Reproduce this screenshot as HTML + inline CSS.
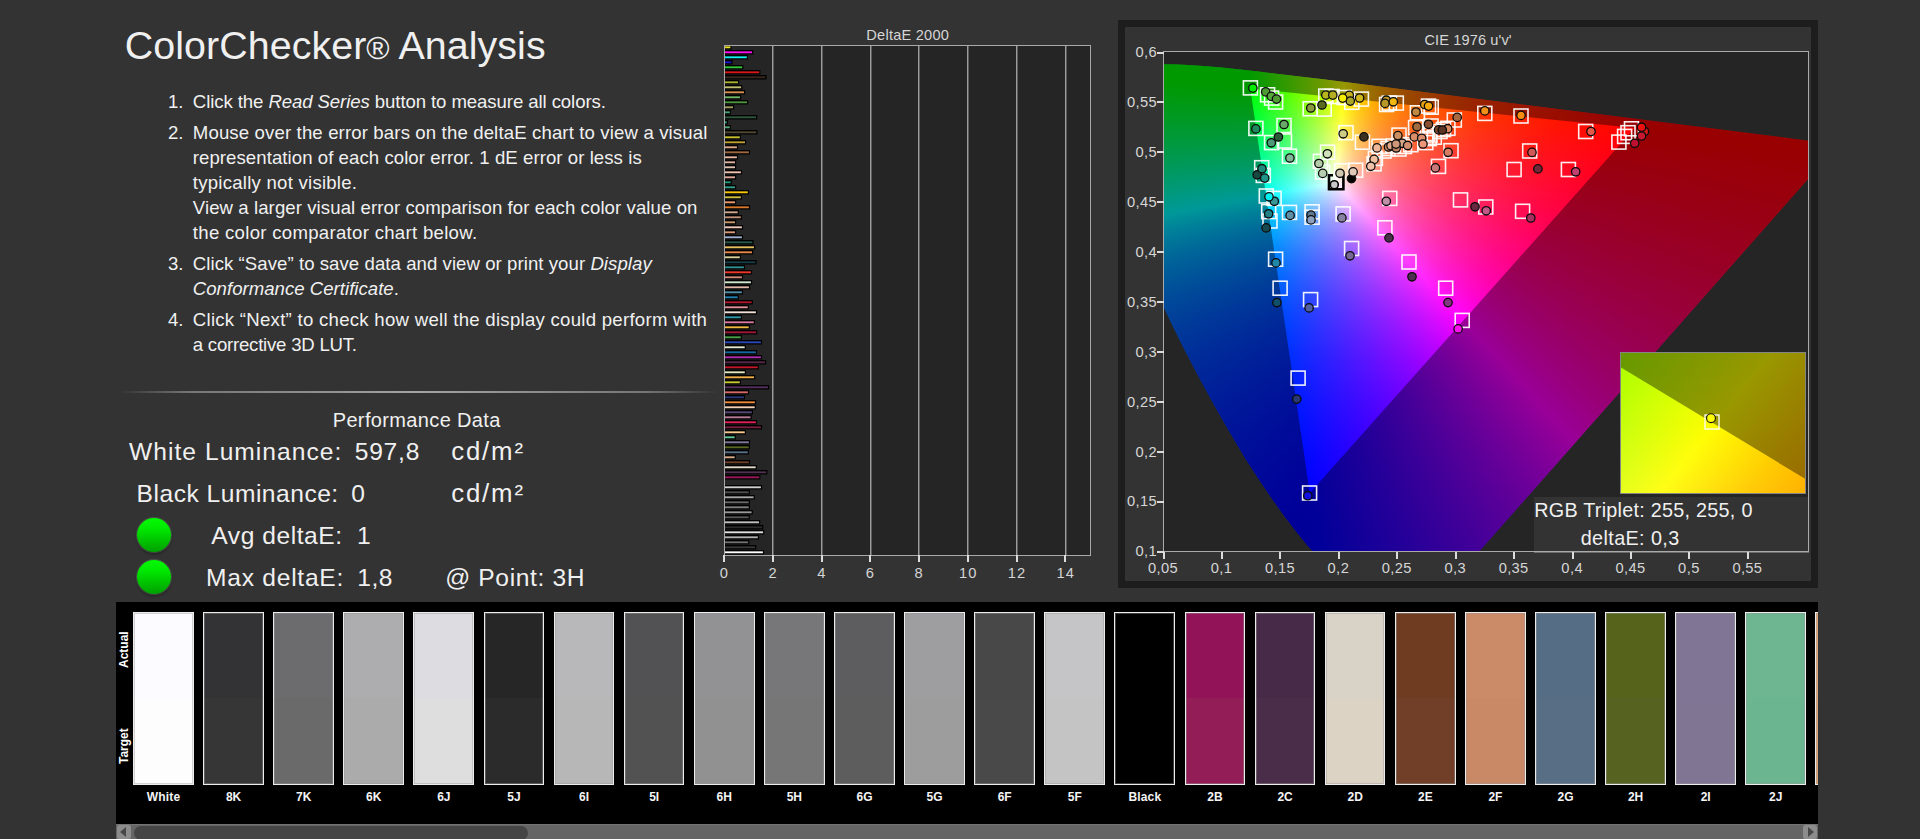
<!DOCTYPE html>
<html lang="en"><head><meta charset="utf-8"><title>ColorChecker Analysis</title>
<style>
*{margin:0;padding:0;box-sizing:border-box}
html,body{width:1920px;height:839px;overflow:hidden;background:#333;font-family:"Liberation Sans", sans-serif}
.t{position:absolute;white-space:nowrap;line-height:1}
.sep{position:absolute;left:118px;top:391px;width:600px;height:2px;background:linear-gradient(90deg,rgba(140,140,140,0),rgba(140,140,140,.75) 12%,rgba(170,170,170,.95) 50%,rgba(140,140,140,.75) 88%,rgba(140,140,140,0))}
.led{position:absolute;left:137px;width:34px;height:34px;border-radius:50%;background:linear-gradient(#04fa04 0,#00ea00 30%,#00c400 65%,#00a000 100%);box-shadow:0 0 0 1px rgba(90,110,90,.55),0 2px 3px rgba(0,0,0,.4)}
#bc{position:absolute;left:724px;top:45px;width:366.5px;height:511px;border:1px solid #a9a9a9;background:#252525;overflow:hidden}
#bc u{position:absolute;top:0;width:1px;height:509px;background:#9c9c9c;box-shadow:1px 0 0 rgba(150,150,150,.5)}
.bt u{position:absolute;top:555px;width:2px;height:6.5px;background:#dcdcdc}
#cf{position:absolute;left:1118px;top:20px;width:700px;height:568px;border:7px solid #1d1d1d;background:#333}
#pl{position:absolute;left:1163px;top:51px;width:646px;height:501px;border:1px solid #aaa;background:#252525;overflow:hidden}
#lc{position:absolute;left:0;top:0;width:644px;height:500px;clip-path:polygon(241.9px 582.5px,240.9px 582.6px,240.3px 583.1px,237.9px 582.9px,235.3px 581.4px,232.6px 579.3px,224.6px 572.4px,181.9px 533.2px,168px 519.8px,156.2px 507.6px,143px 492.9px,132.9px 480.6px,121.4px 465.6px,108.8px 448px,95.4px 428.3px,81.3px 406.4px,66.7px 382.1px,51.6px 355.8px,36.5px 328.2px,21.5px 299.7px,7.1px 270.8px,0.3px 256.3px,-6.2px 242px,-17.8px 214px,-28.1px 187.3px,-36.9px 162.4px,-44.2px 139.6px,-50px 119.3px,-54.2px 101.5px,-57.2px 85.9px,-59px 72.5px,-59.7px 61px,-59.3px 51px,-58.8px 46.6px,-57px 38.7px,-55.8px 35.2px,-54.4px 32px,-52.8px 29.1px,-50.9px 26.4px,-49px 24.1px,-46.8px 22px,-44.5px 20.2px,-42px 18.7px,-36.8px 16.3px,-34px 15.3px,-28.2px 14px,-18.8px 12.9px,-5.5px 12.3px,14.6px 12.5px,32.2px 13.4px,55.1px 15.3px,94.4px 19.5px,159.1px 27.3px,674.5px 92.5px)}
#lc i,#in i{position:absolute;display:block}
#ov{position:absolute;left:0;top:0}
.cx u{position:absolute;top:552px;width:2px;height:7px;background:#dcdcdc}
.cy u{position:absolute;left:1156.5px;width:7px;height:2px;background:#dcdcdc}
#in{position:absolute;left:457px;top:301px;width:184px;height:140px;outline:1.5px solid #858585;overflow:hidden}
#tip{position:absolute;left:370px;top:445px;width:274px;height:54px;background:#333}
#st{position:absolute;left:116px;top:602px;width:1702px;height:222px;background:#000;overflow:hidden}
.sw{position:absolute;top:10px;width:60.8px;height:173px;border:1px solid #ececec;box-shadow:inset 0 0 0 1px rgba(150,150,150,.42)}
.rot{position:absolute;color:#fff;font-weight:bold;font-size:12px;line-height:1;transform:rotate(-90deg);transform-origin:0 0;white-space:nowrap}
#sb{position:absolute;left:116px;top:824px;width:1702px;height:15px;background:#656565;border-top:1px solid #737373}
#sb .th{position:absolute;left:18px;top:0.5px;width:394px;height:14px;border-radius:7px;background:#454545}
#sb .ab{position:absolute;top:0;width:14px;height:14px;background:#8c8c8c;border-radius:2.5px}
#sb .ab::after{content:"";position:absolute;top:2px;border:5px solid transparent}
#sb .l::after{left:3.5px;border-right:6px solid #484848;border-left:0}
#sb .r::after{right:3.5px;border-left:6px solid #484848;border-right:0}
</style></head><body>
<div class="sep"></div>
<div class="led" style="top:518px"></div><div class="led" style="top:560px"></div>
<div id="bc"><u style="left:47px"></u><u style="left:96px"></u><u style="left:145px"></u><u style="left:193px"></u><u style="left:242px"></u><u style="left:291px"></u><u style="left:340px"></u><svg width="366" height="509" style="position:absolute;left:0;top:0"><path d="M0 -0.95h6.6v4.5h-6.6zM0 4.05h28.3v4.5h-28.3zM0 9.05h23v4.5h-23zM0 14.05h7.5v4.5h-7.5zM0 19.05h18.4v4.5h-18.4zM0 24.05h35.4v4.5h-35.4zM0 29.05h41.5v4.5h-41.5zM0 34.05h14.2v4.5h-14.2zM0 39.05h17.3v4.5h-17.3zM0 44.05h20.2v4.5h-20.2zM0 49.05h16.2v4.5h-16.2zM0 54.05h23.2v4.5h-23.2zM0 59.05h9.2v4.5h-9.2zM0 64.05h6.1v4.5h-6.1zM0 69.05h32.3v4.5h-32.3zM0 74.05h3v4.5h-3zM0 79.05h6v4.5h-6zM0 84.05h32.5v4.5h-32.5zM0 89.05h16v4.5h-16zM0 94.05h21.2v4.5h-21.2zM0 99.05h13.1v4.5h-13.1zM0 104.05h25.1v4.5h-25.1zM0 109.05h13.1v4.5h-13.1zM0 114.05h11.2v4.5h-11.2zM0 119.05h11.2v4.5h-11.2zM0 124.05h17.1v4.5h-17.1zM0 129.05h11.2v4.5h-11.2zM0 134.05h6.9v4.5h-6.9zM0 139.05h11.2v4.5h-11.2zM0 144.05h24v4.5h-24zM0 149.05h17v4.5h-17zM0 154.05h11.2v4.5h-11.2zM0 159.05h25.1v4.5h-25.1zM0 164.05h13.9v4.5h-13.9zM0 169.05h17v4.5h-17zM0 174.05h11.2v4.5h-11.2zM0 179.05h18.1v4.5h-18.1zM0 184.05h11.2v4.5h-11.2zM0 189.05h18.1v4.5h-18.1zM0 194.05h28.5v4.5h-28.5zM0 199.05h30.2v4.5h-30.2zM0 204.05h28.2v4.5h-28.2zM0 209.05h16v4.5h-16zM0 214.05h31.6v4.5h-31.6zM0 219.05h20.1v4.5h-20.1zM0 224.05h27.1v4.5h-27.1zM0 229.05h18.1v4.5h-18.1zM0 234.05h27.1v4.5h-27.1zM0 239.05h25.1v4.5h-25.1zM0 244.05h18.1v4.5h-18.1zM0 249.05h13.9v4.5h-13.9zM0 254.05h27.8v4.5h-27.8zM0 259.05h24v4.5h-24zM0 264.05h32.1v4.5h-32.1zM0 269.05h17v4.5h-17zM0 274.05h30v4.5h-30zM0 279.05h24.9v4.5h-24.9zM0 284.05h32.3v4.5h-32.3zM0 289.05h17v4.5h-17zM0 294.05h37.1v4.5h-37.1zM0 299.05h20.9v4.5h-20.9zM0 304.05h32.1v4.5h-32.1zM0 309.05h37.1v4.5h-37.1zM0 314.05h41.2v4.5h-41.2zM0 319.05h34v4.5h-34zM0 324.05h21v4.5h-21zM0 329.05h30.2v4.5h-30.2zM0 334.05h16v4.5h-16zM0 339.05h44.1v4.5h-44.1zM0 344.05h24.1v4.5h-24.1zM0 349.05h20.1v4.5h-20.1zM0 354.05h31.1v4.5h-31.1zM0 359.05h30.9v4.5h-30.9zM0 364.05h28v4.5h-28zM0 369.05h26.7v4.5h-26.7zM0 374.05h32.1v4.5h-32.1zM0 379.05h37.1v4.5h-37.1zM0 384.05h21v4.5h-21zM0 389.05h10.9v4.5h-10.9zM0 394.05h25.1v4.5h-25.1zM0 399.05h24.9v4.5h-24.9zM0 404.05h24v4.5h-24zM0 409.05h10.9v4.5h-10.9zM0 414.05h25.1v4.5h-25.1zM0 419.05h31.9v4.5h-31.9zM0 424.05h42.4v4.5h-42.4zM0 429.05h35.4v4.5h-35.4zM0 439.05h37.1v4.5h-37.1zM0 444.05h24.9v4.5h-24.9zM0 449.05h29.8v4.5h-29.8zM0 454.05h24.9v4.5h-24.9zM0 459.05h24.9v4.5h-24.9zM0 464.05h27.8v4.5h-27.8zM0 469.05h24.9v4.5h-24.9zM0 474.05h35.2v4.5h-35.2zM0 479.05h38.3v4.5h-38.3zM0 484.05h39.3v4.5h-39.3zM0 489.05h34v4.5h-34zM0 494.05h24.3v4.5h-24.3zM0 499.05h31.3v4.5h-31.3zM0 504.05h39.1v4.5h-39.1z"/><rect y="0.35" width="5.4" height="1.9" fill="#e8e020"/><rect y="5.35" width="27.1" height="1.9" fill="#ff10f0"/><rect y="10.35" width="21.8" height="1.9" fill="#10f0f0"/><rect y="15.35" width="6.3" height="1.9" fill="#1818c8"/><rect y="20.35" width="17.2" height="1.9" fill="#30c838"/><rect y="25.35" width="34.2" height="1.9" fill="#d81818"/><rect y="30.35" width="40.3" height="1.9" fill="#3a2820"/><rect y="35.35" width="13" height="1.9" fill="#a8b030"/><rect y="40.35" width="16.1" height="1.9" fill="#c0c070"/><rect y="45.35" width="19" height="1.9" fill="#d89050"/><rect y="50.35" width="15" height="1.9" fill="#70b868"/><rect y="55.35" width="22" height="1.9" fill="#4c9440"/><rect y="60.35" width="8" height="1.9" fill="#a0a060"/><rect y="65.35" width="4.9" height="1.9" fill="#40a070"/><rect y="70.35" width="31.1" height="1.9" fill="#305840"/><rect y="75.35" width="1.8" height="1.9" fill="#30a080"/><rect y="80.35" width="4.8" height="1.9" fill="#50a878"/><rect y="85.35" width="31.3" height="1.9" fill="#504830"/><rect y="90.35" width="14.8" height="1.9" fill="#c8c030"/><rect y="95.35" width="20" height="1.9" fill="#c0a030"/><rect y="100.35" width="11.9" height="1.9" fill="#e0a888"/><rect y="105.35" width="23.9" height="1.9" fill="#a06840"/><rect y="110.35" width="11.9" height="1.9" fill="#e8b8a0"/><rect y="115.35" width="10" height="1.9" fill="#e0b0a0"/><rect y="120.35" width="10" height="1.9" fill="#e0c0b0"/><rect y="125.35" width="15.9" height="1.9" fill="#f0c0b0"/><rect y="130.35" width="10" height="1.9" fill="#e0a898"/><rect y="135.35" width="5.7" height="1.9" fill="#209878"/><rect y="140.35" width="10" height="1.9" fill="#30a088"/><rect y="145.35" width="22.8" height="1.9" fill="#f8c808"/><rect y="150.35" width="15.8" height="1.9" fill="#d0c040"/><rect y="155.35" width="10" height="1.9" fill="#f09868"/><rect y="160.35" width="23.9" height="1.9" fill="#d87828"/><rect y="165.35" width="12.7" height="1.9" fill="#d0a890"/><rect y="170.35" width="15.8" height="1.9" fill="#c09078"/><rect y="175.35" width="10" height="1.9" fill="#c89868"/><rect y="180.35" width="16.9" height="1.9" fill="#f0c8b8"/><rect y="185.35" width="10" height="1.9" fill="#d89878"/><rect y="190.35" width="16.9" height="1.9" fill="#a0b0d0"/><rect y="195.35" width="27.3" height="1.9" fill="#285848"/><rect y="200.35" width="29" height="1.9" fill="#e8c060"/><rect y="205.35" width="27" height="1.9" fill="#e88848"/><rect y="210.35" width="14.8" height="1.9" fill="#d8d098"/><rect y="215.35" width="30.4" height="1.9" fill="#184048"/><rect y="220.35" width="18.9" height="1.9" fill="#309090"/><rect y="225.35" width="25.9" height="1.9" fill="#f03828"/><rect y="230.35" width="16.9" height="1.9" fill="#d08878"/><rect y="235.35" width="25.9" height="1.9" fill="#d0e8d0"/><rect y="240.35" width="23.9" height="1.9" fill="#e0b8a8"/><rect y="245.35" width="16.9" height="1.9" fill="#5090a8"/><rect y="250.35" width="12.7" height="1.9" fill="#2080b0"/><rect y="255.35" width="26.6" height="1.9" fill="#b01830"/><rect y="260.35" width="22.8" height="1.9" fill="#e09098"/><rect y="265.35" width="30.9" height="1.9" fill="#f0e0d8"/><rect y="270.35" width="15.8" height="1.9" fill="#3098a8"/><rect y="275.35" width="28.8" height="1.9" fill="#d878a0"/><rect y="280.35" width="23.7" height="1.9" fill="#f0b840"/><rect y="285.35" width="31.1" height="1.9" fill="#a01838"/><rect y="290.35" width="15.8" height="1.9" fill="#48a048"/><rect y="295.35" width="35.9" height="1.9" fill="#2848b8"/><rect y="300.35" width="19.7" height="1.9" fill="#e0e8d0"/><rect y="305.35" width="30.9" height="1.9" fill="#1868a0"/><rect y="310.35" width="35.9" height="1.9" fill="#b030b0"/><rect y="315.35" width="40" height="1.9" fill="#582848"/><rect y="320.35" width="32.8" height="1.9" fill="#c01828"/><rect y="325.35" width="19.8" height="1.9" fill="#e0e8c0"/><rect y="330.35" width="29" height="1.9" fill="#f0b048"/><rect y="335.35" width="14.8" height="1.9" fill="#c8c830"/><rect y="340.35" width="42.9" height="1.9" fill="#583060"/><rect y="345.35" width="22.9" height="1.9" fill="#d86868"/><rect y="350.35" width="18.9" height="1.9" fill="#283878"/><rect y="355.35" width="29.9" height="1.9" fill="#e88838"/><rect y="360.35" width="29.7" height="1.9" fill="#f0d0b8"/><rect y="365.35" width="26.8" height="1.9" fill="#584878"/><rect y="370.35" width="25.5" height="1.9" fill="#b87898"/><rect y="375.35" width="30.9" height="1.9" fill="#e02058"/><rect y="380.35" width="35.9" height="1.9" fill="#782040"/><rect y="385.35" width="19.8" height="1.9" fill="#f8c890"/><rect y="390.35" width="9.7" height="1.9" fill="#60c898"/><rect y="395.35" width="23.9" height="1.9" fill="#807898"/><rect y="400.35" width="23.7" height="1.9" fill="#586820"/><rect y="405.35" width="22.8" height="1.9" fill="#587088"/><rect y="410.35" width="9.7" height="1.9" fill="#d8a888"/><rect y="415.35" width="23.9" height="1.9" fill="#704028"/><rect y="420.35" width="30.7" height="1.9" fill="#e0d8c8"/><rect y="425.35" width="41.2" height="1.9" fill="#503050"/><rect y="430.35" width="34.2" height="1.9" fill="#981858"/><rect y="440.35" width="35.9" height="1.9" fill="#d0d0d0"/><rect y="445.35" width="23.7" height="1.9" fill="#505050"/><rect y="450.35" width="28.6" height="1.9" fill="#a8a8a8"/><rect y="455.35" width="23.7" height="1.9" fill="#686868"/><rect y="460.35" width="23.7" height="1.9" fill="#808080"/><rect y="465.35" width="26.6" height="1.9" fill="#989898"/><rect y="470.35" width="23.7" height="1.9" fill="#585858"/><rect y="475.35" width="34" height="1.9" fill="#c0c0c0"/><rect y="480.35" width="37.1" height="1.9" fill="#2c2c2c"/><rect y="485.35" width="38.1" height="1.9" fill="#e0e0e0"/><rect y="490.35" width="32.8" height="1.9" fill="#b0b0b0"/><rect y="495.35" width="23.1" height="1.9" fill="#707070"/><rect y="500.35" width="30.1" height="1.9" fill="#383838"/><rect y="505.35" width="37.9" height="1.9" fill="#ffffff"/></svg></div>
<div class="bt"><u style="left:723.3px"></u><u style="left:772px"></u><u style="left:820.7px"></u><u style="left:869.4px"></u><u style="left:918.1px"></u><u style="left:966.8px"></u><u style="left:1015.5px"></u><u style="left:1064.2px"></u></div>
<div id="cf"></div>
<div id="pl"><div id="lc">
<i style="left:0px;top:12px;width:42px;height:2px;background:linear-gradient(90deg,#0f0 0,#0f0 42px)"></i>
<i style="left:0px;top:14px;width:64px;height:2px;background:linear-gradient(90deg,#0f0 0,#0f0 64px)"></i>
<i style="left:0px;top:16px;width:83px;height:2px;background:linear-gradient(90deg,#0f0 0,#0f0 83px)"></i>
<i style="left:0px;top:18px;width:101px;height:2px;background:linear-gradient(90deg,#0f0 0,#01ff00 84px,#24ff00 101px)"></i>
<i style="left:0px;top:20px;width:117px;height:2px;background:linear-gradient(90deg,#0f0 0,#0f0 84px,#48ff00 117px)"></i>
<i style="left:0px;top:22px;width:134px;height:2px;background:linear-gradient(90deg,#0f0 0,#01ff00 85px,#57ff00 123px,#72ff00 134px)"></i>
<i style="left:0px;top:24px;width:150px;height:2px;background:linear-gradient(90deg,#0f0 0,#01ff00 85px,#56ff00 123px,#9eff00 150px)"></i>
<i style="left:0px;top:26px;width:166px;height:2px;background:linear-gradient(90deg,#0f0 0,#0f0 85px,#56ff00 123px,#afff00 156px,#ceff00 166px)"></i>
<i style="left:0px;top:28px;width:182px;height:2px;background:linear-gradient(90deg,#00ff02 0,#02ff00 86px,#56ff00 123px,#b0ff00 156px,#ff0 181px,#fffb00 182px)"></i>
<i style="left:0px;top:30px;width:198px;height:2px;background:linear-gradient(90deg,#00ff05 0,#0f0 55px,#01ff00 86px,#56ff00 123px,#adff00 155px,#fffe00 181px,#ffcf00 197px,#ffcd00 198px)"></i>
<i style="left:0px;top:32px;width:214px;height:2px;background:linear-gradient(90deg,#00ff08 0,#0f0 70px,#01ff00 86px,#5f0 123px,#adff00 155px,#fffd00 181px,#ffce00 197px,#ffa900 214px)"></i>
<i style="left:0px;top:34px;width:230px;height:2px;background:linear-gradient(90deg,#00ff0b 0,#0f0 86px,#5f0 123px,#adff00 155px,#feff00 180px,#ffc900 199px,#ff9c00 221px,#ff8e00 230px)"></i>
<i style="left:0px;top:36px;width:245px;height:2px;background:linear-gradient(90deg,#00ff0e 0,#01ff01 87px,#57ff00 124px,#b0ff00 156px,#feff00 180px,#ffcb00 198px,#ff9f00 219px,#ff7900 245px)"></i>
<i style="left:0px;top:38px;width:261px;height:2px;background:linear-gradient(90deg,#0f1 0,#01ff04 87px,#54ff00 123px,#adff00 155px,#ff0 180px,#ffcf00 196px,#ffa200 217px,#ff7900 244px,#f60 261px)"></i>
<i style="left:0px;top:40px;width:277px;height:2px;background:linear-gradient(90deg,#00ff14 0,#00ff08 87px,#54ff01 123px,#adff00 155px,#ff0 180px,#ffce00 196px,#ffa100 217px,#ff7900 244px,#ff5700 277px)"></i>
<i style="left:0px;top:42px;width:293px;height:2px;background:linear-gradient(90deg,#00ff17 0,#02ff0b 88px,#56ff05 124px,#aeff00 155px,#fffe00 180px,#ffce00 196px,#ffa100 217px,#ff7800 244px,#ff5300 281px,#ff4a00 293px)"></i>
<i style="left:0px;top:44px;width:309px;height:2px;background:linear-gradient(90deg,#00ff1a 0,#01ff0f 88px,#56ff09 124px,#aeff03 155px,#fffd00 180px,#ffcd00 196px,#ffa000 217px,#ff7800 244px,#ff5300 281px,#ff3f00 309px)"></i>
<i style="left:0px;top:46px;width:324px;height:2px;background:linear-gradient(90deg,#00ff1d 0,#00ff13 88px,#56ff0d 124px,#aeff07 155px,#feff02 179px,#ffca00 197px,#ff9d00 218px,#ff7500 246px,#ff5000 284px,#ff3600 324px)"></i>
<i style="left:0px;top:48px;width:340px;height:2px;background:linear-gradient(90deg,#00ff20 0,#02ff16 89px,#56ff11 124px,#aeff0c 155px,#feff07 179px,#ffcc02 196px,#ffa000 216px,#ff7800 243px,#ff5200 280px,#ff3100 332px,#ff2d00 340px)"></i>
<i style="left:0px;top:50px;width:356px;height:2px;background:linear-gradient(90deg,#00ff23 0,#01ff1a 89px,#55ff15 124px,#aeff10 155px,#ffff0c 179px,#ffce07 195px,#ffa202 215px,#ff7800 242px,#ff5300 278px,#ff3200 329px,#ff2600 356px)"></i>
<i style="left:0px;top:52px;width:372px;height:2px;background:linear-gradient(90deg,#00ff27 0,#01ff1e 89px,#55ff1a 124px,#aeff15 155px,#fffe11 179px,#ffd00b 194px,#ffa306 214px,#ff7a01 240px,#f50 275px,#ff3400 325px,#ff1f00 372px)"></i>
<i style="left:0px;top:54px;width:388px;height:2px;background:linear-gradient(90deg,#00ff2a 0,#0f2 89px,#55ff1e 124px,#aeff19 155px,#fffe15 179px,#ffcf0f 194px,#ffa209 214px,#ff7a04 240px,#f50 275px,#f30 325px,#ff1900 388px)"></i>
<i style="left:0px;top:56px;width:403px;height:2px;background:linear-gradient(90deg,#00ff2d 0,#02ff26 90px,#57ff22 125px,#afff1e 155px,#fffd1a 179px,#ffce13 194px,#ffa10d 214px,#ff7907 240px,#ff5401 275px,#f30 325px,#ff1500 398px,#ff1400 403px)"></i>
<i style="left:0px;top:58px;width:419px;height:2px;background:linear-gradient(90deg,#00ff30 0,#01ff2a 90px,#57ff26 125px,#afff23 155px,#feff20 178px,#ffc817 196px,#ff9d10 216px,#ff7509 243px,#ff5003 280px,#ff2f00 332px,#ff1200 409px,#ff0f00 419px)"></i>
<i style="left:0px;top:60px;width:435px;height:2px;background:linear-gradient(90deg,#00ff34 0,#00ff2e 90px,#54ff2b 124px,#acff28 154px,#feff25 178px,#ffcd1c 194px,#ffa014 214px,#ff780c 240px,#ff5306 275px,#ff3200 325px,#ff1500 398px,#ff0a00 435px)"></i>
<i style="left:0px;top:62px;width:451px;height:2px;background:linear-gradient(90deg,#00ff37 0,#02ff32 91px,#56ff2f 125px,#afff2c 155px,#ffff2a 178px,#ffcf20 193px,#ffa318 212px,#ff7b10 237px,#ff5609 271px,#ff3502 319px,#ff1700 389px,#ff0600 451px)"></i>
<i style="left:0px;top:64px;width:467px;height:2px;background:linear-gradient(90deg,#00ff3a 0,#01ff36 91px,#56ff33 125px,#afff31 155px,#fffe2f 178px,#ffce25 193px,#ffa31c 212px,#ff7a13 237px,#ff550b 271px,#ff3404 319px,#ff1700 389px,#ff0300 467px)"></i>
<i style="left:0px;top:66px;width:482px;height:2px;background:linear-gradient(90deg,#00ff3d 0,#01ff3a 91px,#56ff38 125px,#afff36 155px,#fffe34 178px,#ffce29 193px,#ffa21f 212px,#ff7a16 237px,#ff550e 271px,#ff3406 319px,#ff1600 389px,#f00 482px)"></i>
<i style="left:0px;top:68px;width:498px;height:2px;background:linear-gradient(90deg,#00ff41 0,#00ff3e 91px,#53ff3d 124px,#acff3b 154px,#fffd39 178px,#ffcd2d 193px,#ffa123 212px,#ff7919 237px,#ff5410 271px,#ff3308 319px,#ff1601 389px,#f00 481px,#f00 498px)"></i>
<i style="left:0px;top:70px;width:514px;height:2px;background:linear-gradient(90deg,#0f4 0,#02ff42 92px,#55ff41 125px,#acff40 154px,#feff3f 177px,#ffca31 194px,#ff9d25 214px,#ff741b 240px,#ff5012 275px,#ff2f09 325px,#ff1202 399px,#f00 483px,#f00 514px)"></i>
<i style="left:0px;top:72px;width:530px;height:2px;background:linear-gradient(90deg,#00ff48 0,#01ff46 92px,#55ff46 125px,#adff45 154px,#feff44 177px,#ffcc36 193px,#ffa02a 212px,#ff781f 237px,#ff5315 271px,#ff320c 319px,#ff1504 390px,#f00 479px,#f00 530px)"></i>
<i style="left:0px;top:74px;width:546px;height:2px;background:linear-gradient(90deg,#00ff4b 0,#00ff4b 92px,#54ff4a 125px,#adff4a 154px,#ffff4a 177px,#ffce3b 192px,#ffa12e 211px,#ff7823 236px,#ff5318 270px,#ff320e 318px,#ff1505 388px,#f00 477px,#f00 546px)"></i>
<i style="left:0px;top:76px;width:561px;height:2px;background:linear-gradient(90deg,#00ff4f 0,#02ff4f 93px,#57ff4f 126px,#b0ff4f 155px,#fffe4f 177px,#ffd041 191px,#ffa233 210px,#ff7926 235px,#ff541a 269px,#ff3310 316px,#ff1507 385px,#f00 475px,#f00 561px)"></i>
<i style="left:0px;top:78px;width:577px;height:2px;background:linear-gradient(90deg,#00ff52 0,#01ff53 93px,#57ff54 126px,#b0ff54 155px,#fffe55 177px,#ffcf45 191px,#ffa237 210px,#ff7829 235px,#ff531d 269px,#ff3212 316px,#ff1509 385px,#ff0002 473px,#f00 577px)"></i>
<i style="left:0px;top:80px;width:593px;height:2px;background:linear-gradient(90deg,#00ff56 0,#00ff58 93px,#56ff59 126px,#adff5a 154px,#fdff5b 176px,#ffc948 193px,#ff9d39 212px,#ff752b 237px,#ff511f 271px,#ff3014 319px,#ff130a 390px,#ff0003 473px,#f00 593px)"></i>
<i style="left:0px;top:82px;width:609px;height:2px;background:linear-gradient(90deg,#00ff59 0,#00ff5c 93px,#53ff5e 125px,#aaff5f 153px,#feff60 176px,#ffcb4e 192px,#ff9e3e 211px,#ff762f 236px,#ff5122 270px,#ff3016 318px,#ff130b 389px,#ff0004 471px,#f00 607px,#f00 609px)"></i>
<i style="left:0px;top:84px;width:625px;height:2px;background:linear-gradient(90deg,#00ff5d 0,#01ff61 94px,#56ff62 126px,#adff64 154px,#ff6 176px,#ffcd53 191px,#ffa243 209px,#ff7934 233px,#ff5425 266px,#ff3319 312px,#ff150e 380px,#ff0005 467px,#f00 610px,#f00 625px)"></i>
<i style="left:0px;top:86px;width:640px;height:2px;background:linear-gradient(90deg,#00ff60 0,#01ff65 94px,#55ff67 126px,#aeff6a 154px,#ffff6c 176px,#ffcf59 190px,#ffa348 208px,#ff7a37 232px,#ff5529 264px,#ff341c 309px,#ff1610 375px,#ff0007 464px,#f00 623px,#f00 640px)"></i>
<i style="left:0px;top:88px;width:644px;height:2px;background:linear-gradient(90deg,#00ff64 0,#00ff6a 94px,#55ff6d 126px,#aeff6f 154px,#fffe72 176px,#ffce5e 190px,#ffa24c 208px,#ff793b 232px,#ff542b 264px,#ff331e 309px,#ff1611 375px,#ff0008 463px,#f00 639px,#f00 644px)"></i>
<i style="left:0px;top:90px;width:644px;height:2px;background:linear-gradient(90deg,#00ff68 0,#02ff6e 95px,#58ff72 127px,#b1ff75 155px,#fffd77 176px,#ffce63 190px,#ffa150 208px,#ff783e 232px,#ff542e 264px,#ff3320 309px,#ff1613 375px,#ff0009 462px,#f00 644px)"></i>
<i style="left:0px;top:92px;width:644px;height:2px;background:linear-gradient(90deg,#00ff6b 0,#01ff73 95px,#57ff77 127px,#aeff7b 154px,#fdff7e 175px,#ffc765 192px,#ff9b51 211px,#ff723f 236px,#ff4e2e 270px,#ff2d1f 318px,#ff1113 389px,#ff000a 464px,#f00 644px)"></i>
<i style="left:0px;top:94px;width:644px;height:2px;background:linear-gradient(90deg,#00ff6f 0,#00ff78 95px,#54ff7c 126px,#abff80 153px,#feff84 175px,#ffc96b 191px,#ff9e57 209px,#ff7644 233px,#ff5132 266px,#ff3023 312px,#ff1315 380px,#ff000c 460px,#f00 644px)"></i>
<i style="left:0px;top:96px;width:644px;height:2px;background:linear-gradient(90deg,#00ff73 0,#00ff7d 95px,#51ff81 125px,#a7ff86 152px,#ffff8a 175px,#ffce73 189px,#ffa15d 207px,#ff7949 230px,#ff5437 262px,#ff3226 307px,#ff1518 373px,#ff000d 457px,#ff0001 644px)"></i>
<i style="left:0px;top:98px;width:644px;height:2px;background:linear-gradient(90deg,#00ff76 0,#01ff82 96px,#56ff87 127px,#afff8c 154px,#ffff91 175px,#ffce78 189px,#ffa161 207px,#ff784c 230px,#ff5339 262px,#ff3229 307px,#ff141a 373px,#ff000f 455px,#ff0002 644px)"></i>
<i style="left:0px;top:100px;width:644px;height:2px;background:linear-gradient(90deg,#00ff7a 0,#01ff87 96px,#56ff8c 127px,#afff92 154px,#fffe97 175px,#ffcd7d 189px,#ffa065 207px,#ff7850 230px,#ff533c 262px,#ff312b 307px,#ff141b 373px,#ff0010 454px,#ff0003 644px)"></i>
<i style="left:0px;top:102px;width:644px;height:2px;background:linear-gradient(90deg,#00ff7e 0,#00ff8b 96px,#53ff91 126px,#abff98 153px,#fffd9d 175px,#ffcf83 188px,#ffa36b 205px,#ff7a55 228px,#ff5540 259px,#ff342e 302px,#ff161e 365px,#ff0012 450px,#ff0004 644px)"></i>
<i style="left:0px;top:104px;width:644px;height:2px;background:linear-gradient(90deg,#00ff82 0,#02ff91 97px,#55ff97 127px,#afff9e 154px,#fdffa4 174px,#ffc885 190px,#ff9c6c 208px,#ff7455 232px,#ff4f41 264px,#ff2e2e 310px,#ff111d 378px,#ff0013 452px,#ff0004 644px)"></i>
<i style="left:0px;top:106px;width:644px;height:2px;background:linear-gradient(90deg,#00ff86 0,#01ff96 97px,#55ff9d 127px,#acffa4 153px,#feffab 174px,#ffca8c 189px,#ff9d71 207px,#ff765a 230px,#ff5144 262px,#ff3031 307px,#ff1320 373px,#ff0014 449px,#ff0005 644px)"></i>
<i style="left:0px;top:108px;width:644px;height:2px;background:linear-gradient(90deg,#00ff8a 0,#00ff9b 97px,#55ffa2 127px,#acffaa 153px,#ffffb1 174px,#ffcd93 188px,#ffa178 205px,#ff785f 228px,#ff5349 259px,#ff3235 302px,#ff1523 366px,#ff0016 446px,#ff0006 644px)"></i>
<i style="left:0px;top:110px;width:644px;height:2px;background:linear-gradient(90deg,#00ff8e 0,#00ffa0 97px,#4effa7 125px,#a5ffb0 151px,#ffffb8 174px,#ffcf9a 187px,#ffa27e 204px,#ff7a65 226px,#ff554d 256px,#ff3439 298px,#ff1626 360px,#ff0018 443px,#ff0007 644px)"></i>
<i style="left:0px;top:112px;width:644px;height:2px;background:linear-gradient(90deg,#00ff92 0,#01ffa5 98px,#57ffae 128px,#b0ffb7 154px,#fffebe 174px,#ffce9f 187px,#ffa282 204px,#ff7968 226px,#ff5450 256px,#ff333b 298px,#ff1628 360px,#ff0019 442px,#ff0008 643px,#ff0008 644px)"></i>
<i style="left:0px;top:114px;width:644px;height:2px;background:linear-gradient(90deg,#00ff96 0,#01ffab 98px,#57ffb4 128px,#b0ffbd 154px,#fffdc5 174px,#ffcda5 187px,#ffa187 204px,#ff796c 226px,#ff5453 256px,#ff333d 298px,#ff1529 360px,#ff001a 440px,#ff0009 636px,#ff0008 644px)"></i>
<i style="left:0px;top:116px;width:644px;height:2px;background:linear-gradient(90deg,#00ff9a 0,#00ffb0 98px,#50ffb9 126px,#a9ffc3 152px,#fdffcd 173px,#ffc7a6 189px,#ff9c88 206px,#ff736c 229px,#ff4f53 260px,#ff2f3d 304px,#ff1229 369px,#ff001c 441px,#ff000a 634px,#ff0009 644px)"></i>
<i style="left:0px;top:118px;width:644px;height:2px;background:linear-gradient(90deg,#00ff9e 0,#02ffb6 99px,#56ffc0 128px,#adffca 153px,#feffd4 173px,#ffccaf 187px,#ff9f90 204px,#ff7773 226px,#ff5259 256px,#ff3242 298px,#ff142d 360px,#ff001e 437px,#ff000b 623px,#ff000a 644px)"></i>
<i style="left:0px;top:120px;width:644px;height:2px;background:linear-gradient(90deg,#00ffa2 0,#01ffbb 99px,#56ffc6 128px,#adffd1 153px,#ffffdb 173px,#ffceb7 186px,#ffa397 202px,#ff7979 224px,#ff555e 253px,#ff3446 294px,#ff1630 354px,#ff001f 434px,#ff000d 614px,#ff000b 644px)"></i>
<i style="left:0px;top:122px;width:644px;height:2px;background:linear-gradient(90deg,#00ffa6 0,#00ffc1 99px,#5fc 128px,#adffd8 153px,#fffee2 173px,#ffcdbd 186px,#ffa29c 202px,#ff7a7e 223px,#ff5562 252px,#ff3448 293px,#ff1632 353px,#ff0021 432px,#ff000e 607px,#ff000b 644px)"></i>
<i style="left:0px;top:124px;width:644px;height:2px;background:linear-gradient(90deg,#0fa 0,#02ffc7 100px,#58ffd3 129px,#b1ffdf 154px,#fffee9 173px,#ffcdc2 186px,#ffa1a1 202px,#ff7982 223px,#ff5465 252px,#ff334b 293px,#ff1634 353px,#f02 431px,#ff000f 602px,#ff000c 644px)"></i>
<i style="left:0px;top:126px;width:644px;height:2px;background:linear-gradient(90deg,#00ffaf 0,#0fc 99px,#3effd5 121px,#97ffe2 147px,#efffef 169px,#fffdef 173px,#ffccc8 186px,#ffa0a5 202px,#ff7985 223px,#ff5468 252px,#ff324d 293px,#ff1536 353px,#ff0024 430px,#ff0010 597px,#ff000d 644px)"></i>
<i style="left:0px;top:128px;width:644px;height:2px;background:linear-gradient(90deg,#00ffb3 0,#00ffd1 97px,#03ffd3 101px,#57ffdf 129px,#b1ffed 154px,#fdfff8 172px,#ffc8cb 187px,#ff9ba6 204px,#ff7385 226px,#ff4f68 256px,#ff2f4d 298px,#ff1235 361px,#ff0025 430px,#ff0012 594px,#ff000e 644px)"></i>
<i style="left:0px;top:130px;width:643px;height:2px;background:linear-gradient(90deg,#00ffb7 0,#00ffd6 95px,#02ffd8 101px,#57ffe6 129px,#aefff3 153px,#fdfeff 172px,#ffc7d1 187px,#ff9aab 204px,#ff7389 226px,#ff4e6b 256px,#ff2d4f 299px,#ff1136 362px,#ff0027 429px,#ff0013 590px,#ff000f 643px)"></i>
<i style="left:0px;top:132px;width:641px;height:2px;background:linear-gradient(90deg,#0fb 0,#00ffdb 93px,#02ffde 101px,#57ffec 129px,#aefffb 153px,#dcfbff 165px,#fef5ff 174px,#ffc0d1 189px,#ff95ac 206px,#ff6d89 229px,#ff4a6a 260px,#ff2a4e 304px,#ff0e36 370px,#ff0028 428px,#ff0014 586px,#ff0010 641px)"></i>
<i style="left:0px;top:134px;width:639px;height:2px;background:linear-gradient(90deg,#00ffc0 0,#00ffe0 91px,#01ffe4 101px,#56fff3 129px,#a9fdff 152px,#feecff 176px,#ffbcd4 190px,#ff92af 207px,#ff6b8c 230px,#ff476b 262px,#ff284f 307px,#ff0c36 375px,#ff002a 427px,#ff0015 582px,#f01 639px)"></i>
<i style="left:0px;top:136px;width:638px;height:2px;background:linear-gradient(90deg,#00ffc4 0,#00ffe5 90px,#00ffea 101px,#53fff9 128px,#82fcff 142px,#ffe4ff 178px,#ffb6d4 192px,#ff8bae 210px,#ff658a 234px,#ff426a 267px,#ff234e 315px,#ff0834 387px,#ff002b 427px,#ff0016 579px,#ff0012 638px)"></i>
<i style="left:0px;top:138px;width:636px;height:2px;background:linear-gradient(90deg,#00ffc9 0,#00ffea 88px,#02fff1 102px,#58fdff 130px,#f5deff 177px,#ffdcfe 180px,#ffafd5 194px,#ff85ad 213px,#ff5f89 238px,#ff3d69 273px,#ff1e4c 324px,#ff0332 401px,#ff002b 435px,#ff0016 591px,#ff0012 636px)"></i>
<i style="left:0px;top:140px;width:634px;height:2px;background:linear-gradient(90deg,#00ffcd 0,#00ffef 86px,#01fff7 102px,#37fcff 120px,#d0deff 168px,#ffd3fe 182px,#ffa7d2 197px,#ff7daa 217px,#ff5786 244px,#ff3665 281px,#ff1949 335px,#ff0031 414px,#ff001b 552px,#ff0013 634px)"></i>
<i style="left:0px;top:142px;width:632px;height:2px;background:linear-gradient(90deg,#00ffd2 0,#00fff4 85px,#00fffd 102px,#9be2ff 153px,#ffccfd 184px,#ffa1d3 199px,#ff79ab 219px,#ff5487 246px,#f36 284px,#ff1649 340px,#ff0032 414px,#ff001c 550px,#ff0014 632px)"></i>
<i style="left:0px;top:144px;width:631px;height:2px;background:linear-gradient(90deg,#00ffd6 0,#00fff9 83px,#00fcff 99px,#02faff 103px,#9ddaff 155px,#fec7ff 185px,#ff97ce 203px,#ff70a7 224px,#ff4c83 253px,#ff2c62 294px,#ff1045 355px,#f03 416px,#ff001d 552px,#ff0015 631px)"></i>
<i style="left:0px;top:146px;width:629px;height:2px;background:linear-gradient(90deg,#00ffdb 0,#00fffe 81px,#01f4ff 103px,#9cd4ff 156px,#ffc0ff 187px,#ff94d1 204px,#ff6ea9 225px,#ff4b85 254px,#ff2b64 295px,#ff0f47 355px,#ff0035 415px,#ff001e 548px,#ff0016 629px)"></i>
<i style="left:0px;top:148px;width:627px;height:2px;background:linear-gradient(90deg,#00ffdf 0,#00fdff 75px,#01eeff 103px,#9bceff 157px,#ffb9ff 189px,#ff91d4 205px,#ff6bac 226px,#ff4987 255px,#ff2a65 296px,#ff0e48 356px,#ff0037 413px,#ff0020 543px,#ff0017 627px)"></i>
<i style="left:0px;top:150px;width:625px;height:2px;background:linear-gradient(90deg,#00ffe4 0,#00fdff 65px,#00e8ff 103px,#95c9ff 156px,#ffb2fe 191px,#ff8ad2 208px,#ff65a9 230px,#ff4485 260px,#ff2664 302px,#ff0b47 364px,#ff0038 412px,#ff0021 540px,#ff0018 625px)"></i>
<i style="left:0px;top:152px;width:623px;height:2px;background:linear-gradient(90deg,#00ffe9 0,#00fdff 54px,#02e2ff 104px,#9ac2ff 159px,#ffacfe 193px,#ff85d2 210px,#ff61aa 232px,#ff4186 262px,#ff2364 305px,#ff0a47 368px,#ff003a 411px,#ff0023 536px,#ff0019 623px)"></i>
<i style="left:0px;top:154px;width:622px;height:2px;background:linear-gradient(90deg,#0fe 0,#00fdff 43px,#01ddff 104px,#99bdff 160px,#ffa6fd 195px,#ff80d2 212px,#ff5da9 235px,#ff3d85 266px,#ff2064 310px,#ff0747 375px,#ff003c 411px,#ff0024 535px,#ff001a 622px)"></i>
<i style="left:0px;top:156px;width:620px;height:2px;background:linear-gradient(90deg,#00fff2 0,#00fdff 33px,#00d8ff 104px,#98b7ff 161px,#fea2ff 196px,#ff7ad0 215px,#ff58a9 238px,#ff3984 270px,#ff1d63 315px,#ff0546 381px,#ff003d 412px,#ff0025 535px,#ff001b 620px)"></i>
<i style="left:0px;top:158px;width:618px;height:2px;background:linear-gradient(90deg,#00fff7 0,#00fdff 22px,#02d3ff 105px,#9bb2ff 163px,#ff9cff 198px,#ff77d3 216px,#ff55a9 240px,#ff3785 272px,#ff1c64 317px,#ff0447 383px,#ff003e 413px,#ff0026 535px,#ff001c 618px)"></i>
<i style="left:0px;top:160px;width:616px;height:2px;background:linear-gradient(90deg,#00fffc 0,#00f8ff 22px,#01ceff 105px,#9aadff 164px,#ff96ff 200px,#ff73d3 218px,#ff52aa 242px,#ff3586 274px,#ff1a64 320px,#ff0247 387px,#ff002e 491px,#ff001d 616px)"></i>
<i style="left:0px;top:162px;width:615px;height:2px;background:linear-gradient(90deg,#00fdff 0,#00c9ff 105px,#99a8ff 165px,#ff91fe 202px,#ff6fd3 220px,#ff4fab 244px,#ff3286 277px,#ff1865 323px,#ff0148 391px,#ff002e 497px,#ff001e 615px)"></i>
<i style="left:0px;top:164px;width:613px;height:2px;background:linear-gradient(90deg,#00f8ff 0,#02c5ff 106px,#9ba3ff 167px,#ff8cfe 204px,#ff69d1 223px,#ff4aa9 248px,#ff2e84 282px,#ff1463 330px,#ff0048 396px,#ff002e 503px,#ff0020 613px)"></i>
<i style="left:0px;top:166px;width:611px;height:2px;background:linear-gradient(90deg,#00f3ff 0,#01c0ff 106px,#9b9eff 168px,#ff87fd 206px,#ff65d2 225px,#ff47a9 250px,#ff2c85 284px,#ff1364 332px,#ff0049 395px,#ff0030 501px,#ff0021 611px)"></i>
<i style="left:0px;top:168px;width:609px;height:2px;background:linear-gradient(90deg,#00efff 0,#01bcff 106px,#9a9aff 169px,#fe83ff 207px,#ff60d0 228px,#ff43a8 254px,#ff2883 289px,#ff0f62 339px,#ff004b 395px,#ff0031 499px,#f02 609px)"></i>
<i style="left:0px;top:170px;width:608px;height:2px;background:linear-gradient(90deg,#00eaff 0,#00b8ff 106px,#9796ff 169px,#ff7fff 209px,#ff5ed2 229px,#ff41a9 255px,#ff2685 290px,#ff0f64 340px,#ff004d 393px,#f03 495px,#ff0023 608px)"></i>
<i style="left:0px;top:172px;width:606px;height:2px;background:linear-gradient(90deg,#00e6ff 0,#01b4ff 107px,#9b91ff 172px,#ff7aff 211px,#ff5bd2 231px,#ff3eaa 257px,#ff2485 293px,#ff0d64 343px,#ff004f 392px,#ff0035 492px,#ff0024 606px)"></i>
<i style="left:0px;top:174px;width:604px;height:2px;background:linear-gradient(90deg,#00e2ff 0,#01b0ff 107px,#9b8dff 173px,#ff75fe 213px,#ff57d2 233px,#ff3baa 260px,#ff2285 296px,#ff0b64 347px,#ff0052 390px,#ff0037 488px,#ff0025 604px)"></i>
<i style="left:0px;top:176px;width:602px;height:2px;background:linear-gradient(90deg,#00deff 0,#00acff 107px,#9a89ff 174px,#ff71fe 215px,#ff53d1 236px,#ff38a9 263px,#ff1f84 300px,#ff0964 352px,#ff0054 389px,#ff0038 486px,#ff0026 602px)"></i>
<i style="left:0px;top:178px;width:600px;height:2px;background:linear-gradient(90deg,#00daff 0,#02a8ff 108px,#9c85ff 176px,#ff6dfd 217px,#ff4fd1 238px,#ff34a8 266px,#ff1c84 304px,#ff0763 357px,#ff0056 388px,#ff003a 483px,#ff0027 600px)"></i>
<i style="left:0px;top:180px;width:599px;height:2px;background:linear-gradient(90deg,#00d6ff 0,#01a5ff 108px,#9b81ff 177px,#ff68fd 219px,#ff4cd1 240px,#ff32a9 268px,#ff1a84 306px,#ff0563 360px,#ff0057 388px,#ff003c 482px,#ff0028 599px)"></i>
<i style="left:0px;top:182px;width:597px;height:2px;background:linear-gradient(90deg,#00d2ff 0,#00a1ff 108px,#9a7dff 178px,#f6f 220px,#ff4ad3 241px,#ff31ab 269px,#ff1986 307px,#ff0465 361px,#ff0058 389px,#ff003d 483px,#ff0029 597px)"></i>
<i style="left:0px;top:184px;width:595px;height:2px;background:linear-gradient(90deg,#00cfff 0,#029eff 109px,#9c79ff 180px,#ff62ff 222px,#ff46d2 244px,#ff2da9 273px,#ff1684 312px,#ff0264 367px,#ff0047 448px,#ff002d 575px,#ff002b 595px)"></i>
<i style="left:0px;top:186px;width:593px;height:2px;background:linear-gradient(90deg,#00cbff 0,#019bff 109px,#9c76ff 181px,#ff5efe 224px,#ff43d2 246px,#ff2baa 275px,#ff1484 315px,#ff0063 371px,#ff0047 453px,#ff002d 581px,#ff002c 593px)"></i>
<i style="left:0px;top:188px;width:592px;height:2px;background:linear-gradient(90deg,#00c8ff 0,#0197ff 109px,#9b73ff 182px,#ff5afe 226px,#ff41d2 248px,#ff29aa 277px,#ff1385 317px,#ff0064 373px,#ff0047 456px,#ff002e 585px,#ff002d 592px)"></i>
<i style="left:0px;top:190px;width:590px;height:2px;background:linear-gradient(90deg,#00c4ff 0,#0294ff 110px,#9d6fff 184px,#ff57fd 228px,#ff3dd1 251px,#ff25a8 281px,#ff1084 322px,#f06 374px,#ff0048 456px,#ff002f 584px,#ff002e 590px)"></i>
<i style="left:0px;top:192px;width:588px;height:2px;background:linear-gradient(90deg,#00c1ff 0,#0191ff 110px,#9c6cff 185px,#ff53fd 230px,#ff3ad1 253px,#ff23a9 283px,#ff0f85 324px,#ff0068 373px,#ff004a 454px,#ff0031 579px,#ff002f 588px)"></i>
<i style="left:0px;top:194px;width:586px;height:2px;background:linear-gradient(90deg,#00beff 0,#018eff 110px,#9c69ff 186px,#ff51ff 231px,#ff38d3 254px,#ff21aa 285px,#ff0d85 327px,#ff006b 371px,#ff004d 450px,#f03 572px,#ff0030 586px)"></i>
<i style="left:0px;top:196px;width:585px;height:2px;background:linear-gradient(90deg,#0bf 0,#008bff 110px,#9b66ff 187px,#ff4eff 233px,#ff36d3 256px,#ff20aa 287px,#ff0b85 329px,#ff006d 370px,#ff004f 448px,#ff0034 567px,#ff0032 585px)"></i>
<i style="left:0px;top:198px;width:583px;height:2px;background:linear-gradient(90deg,#00b7ff 0,#0288ff 111px,#9d63ff 189px,#ff4afe 235px,#ff33d2 259px,#ff1da9 291px,#ff0984 334px,#ff006f 369px,#ff0051 446px,#ff0036 563px,#f03 583px)"></i>
<i style="left:0px;top:200px;width:581px;height:2px;background:linear-gradient(90deg,#00b4ff 0,#0186ff 111px,#9c60ff 190px,#ff47fe 237px,#ff30d2 261px,#ff1ba9 293px,#ff0885 336px,#ff0072 367px,#ff0053 442px,#ff0038 556px,#ff0034 581px)"></i>
<i style="left:0px;top:202px;width:579px;height:2px;background:linear-gradient(90deg,#00b2ff 0,#0083ff 111px,#9b5dff 191px,#ff44fd 239px,#ff2ed2 263px,#ff19aa 295px,#ff0685 339px,#ff0074 367px,#f05 441px,#ff003a 553px,#ff0035 579px)"></i>
<i style="left:0px;top:204px;width:578px;height:2px;background:linear-gradient(90deg,#00afff 0,#0280ff 112px,#9b5bff 192px,#ff41fd 241px,#ff2bd1 266px,#ff16a8 299px,#ff0483 344px,#ff0074 369px,#f05 444px,#ff003a 557px,#ff0036 578px)"></i>
<i style="left:0px;top:206px;width:576px;height:2px;background:linear-gradient(90deg,#00acff 0,#017eff 112px,#9a58ff 193px,#ff3fff 242px,#ff29d2 267px,#ff15aa 300px,#ff0385 345px,#ff0073 376px,#ff0054 453px,#ff0039 570px,#ff0038 576px)"></i>
<i style="left:0px;top:208px;width:574px;height:2px;background:linear-gradient(90deg,#00a9ff 0,#017bff 112px,#9a55ff 194px,#ff3cfe 244px,#ff27d3 269px,#ff13aa 302px,#ff0285 347px,#ff0064 411px,#ff0047 505px,#ff0039 574px)"></i>
<i style="left:0px;top:210px;width:572px;height:2px;background:linear-gradient(90deg,#00a6ff 0,#0278ff 113px,#9b52ff 196px,#ff39fe 246px,#ff24d1 272px,#ff11a9 306px,#ff0084 352px,#ff0063 417px,#ff0046 513px,#ff003a 572px)"></i>
<i style="left:0px;top:212px;width:570px;height:2px;background:linear-gradient(90deg,#00a4ff 0,#0176ff 113px,#9b50ff 197px,#ff37fe 248px,#ff22d1 274px,#ff0fa9 308px,#ff0085 354px,#ff0064 419px,#ff0047 515px,#ff003c 570px)"></i>
<i style="left:0px;top:214px;width:569px;height:2px;background:linear-gradient(90deg,#00a1ff 0,#0174ff 113px,#9a4eff 198px,#ff34fd 250px,#ff20d2 276px,#ff0da9 311px,#ff0087 353px,#f06 417px,#ff0049 511px,#ff003d 569px)"></i>
<i style="left:0px;top:216px;width:567px;height:2px;background:linear-gradient(90deg,#009fff 0,#0271ff 114px,#9c4bff 200px,#ff31fd 252px,#ff1dd0 279px,#ff0ba8 314px,#ff008b 351px,#ff0069 414px,#ff004b 506px,#ff003e 567px)"></i>
<i style="left:0px;top:218px;width:565px;height:2px;background:linear-gradient(90deg,#009cff 0,#026fff 114px,#9b49ff 201px,#ff30ff 253px,#ff1cd2 280px,#ff0aaa 315px,#ff008d 350px,#ff006b 412px,#ff004d 502px,#ff0040 565px)"></i>
<i style="left:0px;top:220px;width:563px;height:2px;background:linear-gradient(90deg,#009aff 0,#016dff 114px,#9b46ff 202px,#ff2dfe 255px,#ff1ad2 282px,#ff09a9 318px,#ff0090 349px,#ff006e 410px,#ff004f 499px,#ff0041 563px)"></i>
<i style="left:0px;top:222px;width:562px;height:2px;background:linear-gradient(90deg,#0097ff 0,#016bff 114px,#9a44ff 203px,#ff2bfe 257px,#ff18d2 284px,#ff07aa 320px,#ff0094 347px,#ff0071 407px,#ff0052 493px,#ff0042 562px)"></i>
<i style="left:0px;top:224px;width:560px;height:2px;background:linear-gradient(90deg,#0095ff 0,#0269ff 115px,#9c42ff 205px,#ff28fe 259px,#ff16d1 287px,#ff05a8 324px,#ff0096 347px,#ff0073 406px,#ff0054 491px,#f04 560px)"></i>
<i style="left:0px;top:226px;width:558px;height:2px;background:linear-gradient(90deg,#0093ff 0,#0167ff 115px,#9b40ff 206px,#ff26fd 261px,#ff14d1 289px,#ff04a9 326px,#ff0095 350px,#ff0073 410px,#ff0054 496px,#ff0045 558px)"></i>
<i style="left:0px;top:228px;width:556px;height:2px;background:linear-gradient(90deg,#0091ff 0,#0165ff 115px,#9b3eff 207px,#ff23fd 263px,#ff12d1 291px,#ff02a9 328px,#ff0084 379px,#ff0063 451px,#ff0046 556px)"></i>
<i style="left:0px;top:230px;width:555px;height:2px;background:linear-gradient(90deg,#008eff 0,#0263ff 116px,#9c3bff 209px,#f2f 264px,#ff11d3 292px,#ff01aa 330px,#ff0085 381px,#ff0064 453px,#ff0048 555px)"></i>
<i style="left:0px;top:232px;width:553px;height:2px;background:linear-gradient(90deg,#008cff 0,#0161ff 116px,#9c39ff 210px,#ff20fe 266px,#ff0fd2 295px,#ff00a9 333px,#ff0084 385px,#ff0063 458px,#ff0049 553px)"></i>
<i style="left:0px;top:234px;width:551px;height:2px;background:linear-gradient(90deg,#008aff 0,#015fff 116px,#9b37ff 211px,#ff1efe 268px,#ff0dd2 297px,#f0a 335px,#ff0085 387px,#ff0064 460px,#ff004b 551px)"></i>
<i style="left:0px;top:236px;width:549px;height:2px;background:linear-gradient(90deg,#08f 0,#025dff 117px,#9c35ff 213px,#ff1bfe 270px,#ff0bd1 300px,#ff00ae 333px,#f08 384px,#ff0067 456px,#ff004c 549px)"></i>
<i style="left:0px;top:238px;width:548px;height:2px;background:linear-gradient(90deg,#0086ff 0,#015bff 117px,#9c33ff 214px,#ff19fd 272px,#ff09d1 302px,#ff00b1 332px,#ff008b 382px,#ff006a 452px,#ff004d 548px)"></i>
<i style="left:0px;top:240px;width:546px;height:2px;background:linear-gradient(90deg,#0084ff 0,#0159ff 117px,#9c32ff 215px,#ff17fd 274px,#ff08d1 304px,#ff00b5 330px,#ff008f 379px,#ff006d 447px,#ff004f 546px)"></i>
<i style="left:0px;top:242px;width:544px;height:2px;background:linear-gradient(90deg,#0082ff 0,#0257ff 118px,#9d2fff 217px,#ff16ff 275px,#ff07d3 305px,#ff00b8 329px,#ff0092 377px,#ff0070 444px,#ff0051 541px,#ff0050 544px)"></i>
<i style="left:0px;top:244px;width:542px;height:2px;background:linear-gradient(90deg,#0080ff 0,#0256ff 118px,#9c2eff 218px,#ff14fe 277px,#ff05d1 308px,#f0b 329px,#ff0094 377px,#ff0071 444px,#ff0052 540px,#ff0052 542px)"></i>
<i style="left:0px;top:246px;width:540px;height:2px;background:linear-gradient(90deg,#007eff 0,#0154ff 118px,#9c2cff 219px,#ff12fe 279px,#ff03d2 310px,#ff00b9 333px,#ff0093 382px,#ff0070 450px,#ff0053 540px)"></i>
<i style="left:0px;top:248px;width:539px;height:2px;background:linear-gradient(90deg,#007dff 0,#0153ff 118px,#9c2aff 220px,#ff10fe 281px,#ff02d2 312px,#ff00a9 353px,#ff0085 409px,#ff0064 488px,#f05 539px)"></i>
<i style="left:0px;top:250px;width:537px;height:2px;background:linear-gradient(90deg,#007bff 0,#0251ff 119px,#9d28ff 222px,#ff0efd 283px,#ff00d1 315px,#ff00a8 357px,#ff0084 414px,#ff0063 495px,#ff0056 537px)"></i>
<i style="left:0px;top:252px;width:535px;height:2px;background:linear-gradient(90deg,#0079ff 0,#014fff 119px,#9c27ff 223px,#ff0cfd 285px,#ff00d1 317px,#ff00a9 359px,#ff0084 417px,#ff0063 498px,#ff0058 535px)"></i>
<i style="left:0px;top:254px;width:533px;height:2px;background:linear-gradient(90deg,#07f 0,#014eff 119px,#9a26ff 223px,#ff0bff 286px,#ff00d3 317px,#ff00ab 359px,#ff0086 416px,#ff0065 496px,#ff005a 533px)"></i>
<i style="left:0px;top:256px;width:532px;height:2px;background:linear-gradient(90deg,#0076ff 0,#024cff 120px,#9c24ff 225px,#ff09fe 288px,#ff00d8 315px,#ff00af 356px,#ff0089 412px,#ff0068 490px,#ff005b 532px)"></i>
<i style="left:0px;top:258px;width:530px;height:2px;background:linear-gradient(90deg,#0074ff 0,#014bff 120px,#9b22ff 226px,#ff08fe 290px,#ff00dc 314px,#ff00b3 354px,#ff008d 408px,#ff006b 484px,#ff005d 530px)"></i>
<i style="left:0px;top:260px;width:528px;height:2px;background:linear-gradient(90deg,#0072ff 0,#0149ff 120px,#9b21ff 227px,#ff06fe 292px,#ff00e0 313px,#ff00b6 353px,#ff008f 407px,#ff006d 482px,#ff005e 528px)"></i>
<i style="left:1px;top:262px;width:525px;height:2px;background:linear-gradient(90deg,#0070ff 0,#0248ff 120px,#9c1fff 228px,#ff04fd 293px,#ff00e2 312px,#ff00b9 351px,#ff0092 404px,#ff0070 478px,#ff0060 525px)"></i>
<i style="left:2px;top:264px;width:523px;height:2px;background:linear-gradient(90deg,#006eff 0,#0246ff 119px,#9b1eff 228px,#ff03fd 294px,#ff00da 320px,#ff00b1 362px,#ff008b 419px,#ff0069 499px,#ff0062 523px)"></i>
<i style="left:3px;top:266px;width:520px;height:2px;background:linear-gradient(90deg,#006cff 0,#0145ff 118px,#9b1cff 228px,#ff01fd 295px,#ff00d1 329px,#ff00a8 374px,#ff0084 435px,#ff0063 520px)"></i>
<i style="left:4px;top:268px;width:517px;height:2px;background:linear-gradient(90deg,#006bff 0,#0243ff 118px,#9c1aff 229px,#ff00fe 295px,#ff00d2 329px,#ff00a9 374px,#ff0085 435px,#ff0065 517px)"></i>
<i style="left:5px;top:270px;width:514px;height:2px;background:linear-gradient(90deg,#0069ff 0,#0242ff 117px,#9c19ff 229px,#ff00fe 296px,#ff00d1 331px,#ff00a8 377px,#ff0083 440px,#ff0067 514px)"></i>
<i style="left:6px;top:272px;width:512px;height:2px;background:linear-gradient(90deg,#0067ff 0,#0141ff 116px,#9b18ff 229px,#fd00ff 295px,#ff00cb 338px,#ff00a3 386px,#ff007f 452px,#ff0068 512px)"></i>
<i style="left:7px;top:274px;width:509px;height:2px;background:linear-gradient(90deg,#0065ff 0,#0140ff 115px,#9b16ff 229px,#f700ff 292px,#ff00fd 298px,#ff00d1 333px,#ff00a8 380px,#ff0083 444px,#ff006a 509px)"></i>
<i style="left:8px;top:276px;width:506px;height:2px;background:linear-gradient(90deg,#0063ff 0,#023eff 115px,#9c15ff 230px,#f200ff 289px,#ff00fd 299px,#ff00d0 335px,#ff00a8 382px,#ff0083 446px,#ff006c 506px)"></i>
<i style="left:9px;top:278px;width:503px;height:2px;background:linear-gradient(90deg,#0062ff 0,#013dff 114px,#9c14ff 230px,#ec00ff 286px,#ff00fd 300px,#ff00d1 336px,#ff00a8 384px,#ff0083 449px,#ff006e 503px)"></i>
<i style="left:10px;top:280px;width:500px;height:2px;background:linear-gradient(90deg,#0060ff 0,#013cff 113px,#9b12ff 230px,#e800ff 284px,#ff00fd 301px,#ff00d1 337px,#ff00a8 385px,#ff0083 450px,#ff0070 500px)"></i>
<i style="left:11px;top:282px;width:498px;height:2px;background:linear-gradient(90deg,#005eff 0,#023aff 113px,#9c11ff 231px,#e300ff 281px,#ff00fe 301px,#ff00d2 337px,#ff00a9 385px,#ff0084 450px,#ff0071 498px)"></i>
<i style="left:12px;top:284px;width:495px;height:2px;background:linear-gradient(90deg,#005dff 0,#0139ff 112px,#9c10ff 231px,#df00ff 279px,#ff00fe 302px,#ff00d1 339px,#ff00a8 388px,#ff0084 454px,#ff0073 495px)"></i>
<i style="left:13px;top:286px;width:492px;height:2px;background:linear-gradient(90deg,#005bff 0,#0138ff 111px,#9c0eff 231px,#da00ff 276px,#ff00fe 303px,#ff00d1 340px,#ff00a8 389px,#ff0084 456px,#ff0075 492px)"></i>
<i style="left:14px;top:288px;width:489px;height:2px;background:linear-gradient(90deg,#0059ff 0,#0237ff 111px,#9d0dff 232px,#d500ff 273px,#ff00fd 304px,#ff00d1 341px,#ff00a9 390px,#ff0084 457px,#f07 489px)"></i>
<i style="left:15px;top:290px;width:487px;height:2px;background:linear-gradient(90deg,#0058ff 0,#0236ff 110px,#9c0cff 232px,#d100ff 271px,#ff00fd 305px,#ff00d0 343px,#ff00a8 393px,#ff0083 461px,#ff0079 487px)"></i>
<i style="left:16px;top:292px;width:484px;height:2px;background:linear-gradient(90deg,#0056ff 0,#0135ff 109px,#9c0bff 232px,#c0f 268px,#ff00fe 305px,#ff00d2 343px,#ff00a9 393px,#ff0084 461px,#ff007b 484px)"></i>
<i style="left:17px;top:294px;width:481px;height:2px;background:linear-gradient(90deg,#05f 0,#0233ff 109px,#9d09ff 233px,#c900ff 266px,#ff00fe 306px,#ff00d2 344px,#ff00a9 394px,#ff0084 463px,#ff007d 481px)"></i>
<i style="left:18px;top:296px;width:478px;height:2px;background:linear-gradient(90deg,#0053ff 0,#0232ff 108px,#9d08ff 233px,#c400ff 263px,#ff00fe 307px,#ff00d1 346px,#ff00a8 397px,#ff0083 467px,#ff007f 478px)"></i>
<i style="left:19px;top:298px;width:476px;height:2px;background:linear-gradient(90deg,#0052ff 0,#0131ff 107px,#9c07ff 233px,#c100ff 261px,#ff00fe 308px,#ff00d1 347px,#ff00a8 399px,#ff0083 469px,#ff0080 476px)"></i>
<i style="left:20px;top:300px;width:473px;height:2px;background:linear-gradient(90deg,#0050ff 0,#0130ff 106px,#9c06ff 233px,#be00ff 259px,#ff00fd 309px,#ff00d1 348px,#ff00a8 400px,#ff0083 471px,#ff0082 473px)"></i>
<i style="left:21px;top:302px;width:470px;height:2px;background:linear-gradient(90deg,#004fff 0,#022fff 106px,#9c05ff 233px,#ba00ff 257px,#ff00fd 310px,#ff00d0 350px,#ff00a7 403px,#ff0085 470px)"></i>
<i style="left:22px;top:304px;width:467px;height:2px;background:linear-gradient(90deg,#004dff 0,#012eff 105px,#9b04ff 233px,#b900ff 256px,#ff00fe 310px,#ff00d1 350px,#ff00a8 403px,#ff0087 467px)"></i>
<i style="left:23px;top:306px;width:464px;height:2px;background:linear-gradient(90deg,#004cff 0,#012dff 104px,#9b03ff 233px,#b0f 258px,#ff00fe 311px,#ff00d1 351px,#ff00a9 404px,#ff0089 464px)"></i>
<i style="left:24px;top:308px;width:462px;height:2px;background:linear-gradient(90deg,#004bff 0,#022cff 104px,#9c02ff 234px,#ff00fe 312px,#ff00d2 352px,#ff00a9 405px,#ff008b 462px)"></i>
<i style="left:25px;top:310px;width:459px;height:2px;background:linear-gradient(90deg,#0049ff 0,#022bff 103px,#9c01ff 234px,#ff00fe 313px,#ff00d1 354px,#ff00a8 408px,#ff008d 459px)"></i>
<i style="left:26px;top:312px;width:456px;height:2px;background:linear-gradient(90deg,#0048ff 0,#012aff 102px,#9b00ff 234px,#ff00fd 314px,#ff00d1 355px,#ff00a8 409px,#ff008f 456px)"></i>
<i style="left:27px;top:314px;width:453px;height:2px;background:linear-gradient(90deg,#0047ff 0,#0229ff 102px,#9c00ff 235px,#ff00fd 315px,#ff00d1 356px,#ff00a8 411px,#ff0091 453px)"></i>
<i style="left:28px;top:316px;width:451px;height:2px;background:linear-gradient(90deg,#0045ff 0,#0228ff 101px,#9b00ff 234px,#ff00fe 315px,#ff00d2 356px,#ff00a9 411px,#ff0093 451px)"></i>
<i style="left:30px;top:318px;width:447px;height:2px;background:linear-gradient(90deg,#04f 0,#0127ff 99px,#9800ff 231px,#ff00fe 315px,#ff00d1 357px,#ff00a9 412px,#ff0096 447px)"></i>
<i style="left:31px;top:320px;width:444px;height:2px;background:linear-gradient(90deg,#0042ff 0,#0226ff 99px,#9400ff 228px,#ff00fe 316px,#ff00d1 358px,#ff00a8 414px,#ff0098 444px)"></i>
<i style="left:32px;top:322px;width:441px;height:2px;background:linear-gradient(90deg,#0041ff 0,#0225ff 98px,#9000ff 225px,#ff00fe 317px,#ff00d1 359px,#ff00a9 415px,#ff009a 441px)"></i>
<i style="left:33px;top:324px;width:439px;height:2px;background:linear-gradient(90deg,#0040ff 0,#0125ff 97px,#8e00ff 223px,#ff00fd 318px,#ff00d1 361px,#ff00a8 418px,#ff009c 439px)"></i>
<i style="left:34px;top:326px;width:436px;height:2px;background:linear-gradient(90deg,#003fff 0,#0124ff 96px,#8a00ff 220px,#ff00fd 319px,#ff00d1 362px,#ff00a8 419px,#ff009f 436px)"></i>
<i style="left:35px;top:328px;width:433px;height:2px;background:linear-gradient(90deg,#003eff 0,#0223ff 96px,#8600ff 217px,#ff00fe 319px,#ff00d2 362px,#ff00a9 419px,#ff00a1 433px)"></i>
<i style="left:36px;top:330px;width:430px;height:2px;background:linear-gradient(90deg,#003cff 0,#0122ff 95px,#8300ff 214px,#ff00fe 320px,#ff00d1 364px,#ff00a8 422px,#ff00a4 430px)"></i>
<i style="left:37px;top:332px;width:428px;height:2px;background:linear-gradient(90deg,#003bff 0,#0121ff 94px,#8000ff 212px,#ff00fe 321px,#ff00d1 365px,#ff00a8 423px,#ff00a6 428px)"></i>
<i style="left:38px;top:334px;width:425px;height:2px;background:linear-gradient(90deg,#003aff 0,#0220ff 94px,#7d00ff 209px,#ff00fe 322px,#ff00d1 366px,#ff00a8 425px)"></i>
<i style="left:39px;top:336px;width:422px;height:2px;background:linear-gradient(90deg,#0039ff 0,#021fff 93px,#7a00ff 206px,#ff00fd 323px,#ff00d0 368px,#ff00ab 422px)"></i>
<i style="left:40px;top:338px;width:419px;height:2px;background:linear-gradient(90deg,#0038ff 0,#011fff 92px,#70f 204px,#ff00fd 324px,#ff00d1 369px,#ff00ad 419px)"></i>
<i style="left:41px;top:340px;width:416px;height:2px;background:linear-gradient(90deg,#0037ff 0,#021eff 92px,#7400ff 201px,#ff00fe 324px,#ff00d2 369px,#ff00b0 416px)"></i>
<i style="left:42px;top:342px;width:414px;height:2px;background:linear-gradient(90deg,#0035ff 0,#021dff 91px,#7100ff 198px,#ff00fe 325px,#ff00d2 370px,#ff00b2 414px)"></i>
<i style="left:44px;top:344px;width:410px;height:2px;background:linear-gradient(90deg,#0034ff 0,#011cff 89px,#6e00ff 194px,#ff00fe 325px,#ff00d1 371px,#ff00b5 410px)"></i>
<i style="left:45px;top:346px;width:407px;height:2px;background:linear-gradient(90deg,#03f 0,#021bff 89px,#6b00ff 192px,#ff00fe 326px,#ff00d1 372px,#ff00b8 407px)"></i>
<i style="left:46px;top:348px;width:404px;height:2px;background:linear-gradient(90deg,#0032ff 0,#021bff 88px,#6800ff 189px,#ff00fd 327px,#ff00d1 373px,#f0b 404px)"></i>
<i style="left:47px;top:350px;width:402px;height:2px;background:linear-gradient(90deg,#0031ff 0,#011aff 87px,#6500ff 186px,#ff00fd 328px,#ff00d0 375px,#ff00bd 402px)"></i>
<i style="left:48px;top:352px;width:399px;height:2px;background:linear-gradient(90deg,#0030ff 0,#0119ff 86px,#6300ff 184px,#ff00fd 329px,#ff00d1 376px,#ff00c0 399px)"></i>
<i style="left:49px;top:354px;width:396px;height:2px;background:linear-gradient(90deg,#002fff 0,#0218ff 86px,#6000ff 181px,#fd00ff 326px,#ff00ef 343px,#ff00c3 395px,#ff00c3 396px)"></i>
<i style="left:50px;top:356px;width:393px;height:2px;background:linear-gradient(90deg,#002eff 0,#0218ff 85px,#5d00ff 178px,#fb00ff 325px,#ff00fc 332px,#ff00cf 380px,#ff00c6 393px)"></i>
<i style="left:51px;top:358px;width:391px;height:2px;background:linear-gradient(90deg,#002dff 0,#0117ff 84px,#5a00ff 175px,#f800ff 323px,#ff00fc 332px,#ff00d0 380px,#ff00c8 391px)"></i>
<i style="left:52px;top:360px;width:388px;height:2px;background:linear-gradient(90deg,#002cff 0,#0216ff 84px,#5800ff 173px,#f600ff 322px,#ff00fd 332px,#ff00d1 380px,#ff00cb 388px)"></i>
<i style="left:54px;top:362px;width:384px;height:2px;background:linear-gradient(90deg,#002bff 0,#0215ff 82px,#5600ff 169px,#f200ff 319px,#ff00fd 332px,#ff00d0 381px,#ff00ce 384px)"></i>
<i style="left:55px;top:364px;width:381px;height:2px;background:linear-gradient(90deg,#002aff 0,#0115ff 81px,#5300ff 166px,#ef00ff 317px,#ff00fd 333px,#ff00d1 381px)"></i>
<i style="left:56px;top:366px;width:379px;height:2px;background:linear-gradient(90deg,#0029ff 0,#0214ff 81px,#5100ff 164px,#e0f 316px,#ff00fd 334px,#ff00d4 379px)"></i>
<i style="left:57px;top:368px;width:376px;height:2px;background:linear-gradient(90deg,#0028ff 0,#0213ff 80px,#4e00ff 161px,#eb00ff 314px,#ff00fe 334px,#ff00d7 376px)"></i>
<i style="left:58px;top:370px;width:373px;height:2px;background:linear-gradient(90deg,#0027ff 0,#0113ff 79px,#4c00ff 158px,#e800ff 312px,#ff00fe 335px,#ff00da 373px)"></i>
<i style="left:59px;top:372px;width:370px;height:2px;background:linear-gradient(90deg,#0026ff 0,#0212ff 79px,#4a00ff 156px,#e600ff 311px,#ff00fd 336px,#f0d 370px)"></i>
<i style="left:60px;top:374px;width:367px;height:2px;background:linear-gradient(90deg,#0025ff 0,#0211ff 78px,#4700ff 153px,#e400ff 310px,#ff00fd 337px,#ff00e1 367px)"></i>
<i style="left:62px;top:376px;width:364px;height:2px;background:linear-gradient(90deg,#0024ff 0,#0111ff 76px,#4500ff 149px,#e100ff 307px,#ff00fd 337px,#ff00e3 364px)"></i>
<i style="left:63px;top:378px;width:361px;height:2px;background:linear-gradient(90deg,#0023ff 0,#0110ff 75px,#4200ff 146px,#df00ff 305px,#ff00fd 338px,#ff00e7 361px)"></i>
<i style="left:64px;top:380px;width:358px;height:2px;background:linear-gradient(90deg,#02f 0,#020fff 75px,#4100ff 144px,#d0f 304px,#ff00fe 338px,#ff00ea 358px)"></i>
<i style="left:65px;top:382px;width:355px;height:2px;background:linear-gradient(90deg,#0021ff 0,#020fff 74px,#3e00ff 141px,#da00ff 302px,#ff00fe 339px,#f0e 355px)"></i>
<i style="left:66px;top:384px;width:353px;height:2px;background:linear-gradient(90deg,#0020ff 0,#010eff 73px,#3d00ff 139px,#d900ff 301px,#ff00fd 340px,#ff00f1 353px)"></i>
<i style="left:67px;top:386px;width:350px;height:2px;background:linear-gradient(90deg,#001fff 0,#020eff 73px,#3a00ff 136px,#d600ff 299px,#ff00fd 341px,#ff00f4 350px)"></i>
<i style="left:69px;top:388px;width:346px;height:2px;background:linear-gradient(90deg,#001eff 0,#020dff 71px,#3800ff 132px,#d300ff 296px,#ff00fd 341px,#ff00f8 346px)"></i>
<i style="left:70px;top:390px;width:343px;height:2px;background:linear-gradient(90deg,#001dff 0,#010dff 70px,#3600ff 130px,#d200ff 295px,#ff00fd 342px,#ff00fc 343px)"></i>
<i style="left:71px;top:392px;width:341px;height:2px;background:linear-gradient(90deg,#001dff 0,#020cff 70px,#3400ff 127px,#cf00ff 293px,#f0f 341px)"></i>
<i style="left:72px;top:394px;width:338px;height:2px;background:linear-gradient(90deg,#001cff 0,#020bff 69px,#3200ff 124px,#ce00ff 292px,#fb00ff 338px)"></i>
<i style="left:73px;top:396px;width:335px;height:2px;background:linear-gradient(90deg,#001bff 0,#010bff 68px,#3000ff 122px,#c0f 291px,#f800ff 335px)"></i>
<i style="left:75px;top:398px;width:331px;height:2px;background:linear-gradient(90deg,#001aff 0,#020aff 67px,#2e00ff 118px,#ca00ff 288px,#f400ff 331px)"></i>
<i style="left:76px;top:400px;width:329px;height:2px;background:linear-gradient(90deg,#0019ff 0,#020aff 66px,#2c00ff 116px,#c800ff 287px,#f100ff 329px)"></i>
<i style="left:77px;top:402px;width:326px;height:2px;background:linear-gradient(90deg,#0018ff 0,#0209ff 65px,#2a00ff 113px,#c600ff 285px,#ed00ff 326px)"></i>
<i style="left:78px;top:404px;width:323px;height:2px;background:linear-gradient(90deg,#0018ff 0,#0109ff 64px,#2800ff 110px,#c400ff 283px,#ea00ff 323px)"></i>
<i style="left:80px;top:406px;width:319px;height:2px;background:linear-gradient(90deg,#0017ff 0,#0208ff 63px,#2700ff 107px,#c200ff 281px,#e600ff 319px)"></i>
<i style="left:81px;top:408px;width:316px;height:2px;background:linear-gradient(90deg,#0016ff 0,#0207ff 62px,#2500ff 105px,#c100ff 280px,#e300ff 316px)"></i>
<i style="left:82px;top:410px;width:314px;height:2px;background:linear-gradient(90deg,#0015ff 0,#0107ff 61px,#2300ff 102px,#be00ff 278px,#e000ff 314px)"></i>
<i style="left:83px;top:412px;width:311px;height:2px;background:linear-gradient(90deg,#0014ff 0,#0206ff 61px,#20f 100px,#bd00ff 277px,#d0f 311px)"></i>
<i style="left:85px;top:414px;width:307px;height:2px;background:linear-gradient(90deg,#0013ff 0,#0206ff 59px,#2100ff 97px,#bc00ff 275px,#d900ff 307px)"></i>
<i style="left:86px;top:416px;width:304px;height:2px;background:linear-gradient(90deg,#0013ff 0,#0105ff 58px,#2000ff 95px,#b0f 275px,#d600ff 304px)"></i>
<i style="left:87px;top:418px;width:302px;height:2px;background:linear-gradient(90deg,#0012ff 0,#0205ff 58px,#1f00ff 94px,#b0f 275px,#d400ff 302px)"></i>
<i style="left:88px;top:420px;width:299px;height:2px;background:linear-gradient(90deg,#01f 0,#0204ff 57px,#1e00ff 92px,#ba00ff 274px,#d000ff 299px)"></i>
<i style="left:90px;top:422px;width:295px;height:2px;background:linear-gradient(90deg,#0010ff 0,#0104ff 55px,#1e00ff 90px,#b900ff 273px,#cd00ff 295px)"></i>
<i style="left:91px;top:424px;width:292px;height:2px;background:linear-gradient(90deg,#0010ff 0,#0203ff 55px,#2000ff 92px,#b0f 275px,#ca00ff 292px)"></i>
<i style="left:92px;top:426px;width:290px;height:2px;background:linear-gradient(90deg,#000fff 0,#0203ff 54px,#2600ff 99px,#c100ff 283px,#c800ff 290px)"></i>
<i style="left:94px;top:428px;width:286px;height:2px;background:linear-gradient(90deg,#000eff 0,#0202ff 52px,#3800ff 121px,#c500ff 286px)"></i>
<i style="left:95px;top:430px;width:283px;height:2px;background:linear-gradient(90deg,#000dff 0,#0202ff 52px,#9d00ff 241px,#c100ff 283px)"></i>
<i style="left:96px;top:432px;width:280px;height:2px;background:linear-gradient(90deg,#000dff 0,#0201ff 51px,#9d00ff 241px,#be00ff 280px)"></i>
<i style="left:98px;top:434px;width:277px;height:2px;background:linear-gradient(90deg,#000cff 0,#0201ff 49px,#9c00ff 240px,#bc00ff 277px)"></i>
<i style="left:99px;top:436px;width:274px;height:2px;background:linear-gradient(90deg,#000bff 0,#0101ff 48px,#9c00ff 240px,#b900ff 274px)"></i>
<i style="left:100px;top:438px;width:271px;height:2px;background:linear-gradient(90deg,#000aff 0,#0200ff 48px,#9d00ff 241px,#b600ff 271px)"></i>
<i style="left:102px;top:440px;width:267px;height:2px;background:linear-gradient(90deg,#0009ff 0,#0200ff 46px,#9d00ff 240px,#b300ff 267px)"></i>
<i style="left:103px;top:442px;width:264px;height:2px;background:linear-gradient(90deg,#0009ff 0,#0100ff 45px,#9c00ff 240px,#b100ff 264px)"></i>
<i style="left:105px;top:444px;width:261px;height:2px;background:linear-gradient(90deg,#0008ff 0,#0200ff 44px,#9d00ff 240px,#ae00ff 261px)"></i>
<i style="left:106px;top:446px;width:258px;height:2px;background:linear-gradient(90deg,#0007ff 0,#0200ff 43px,#9d00ff 240px,#ac00ff 258px)"></i>
<i style="left:107px;top:448px;width:255px;height:2px;background:linear-gradient(90deg,#0007ff 0,#0200ff 42px,#9c00ff 240px,#a900ff 255px)"></i>
<i style="left:109px;top:450px;width:251px;height:2px;background:linear-gradient(90deg,#0006ff 0,#0200ff 41px,#9d00ff 240px,#a600ff 251px)"></i>
<i style="left:110px;top:452px;width:249px;height:2px;background:linear-gradient(90deg,#0005ff 0,#0200ff 40px,#9d00ff 240px,#a400ff 249px)"></i>
<i style="left:112px;top:454px;width:245px;height:2px;background:linear-gradient(90deg,#0004ff 0,#0200ff 38px,#9d00ff 239px,#a200ff 245px)"></i>
<i style="left:113px;top:456px;width:242px;height:2px;background:linear-gradient(90deg,#0004ff 0,#0200ff 38px,#9c00ff 239px,#9f00ff 242px)"></i>
<i style="left:114px;top:458px;width:239px;height:2px;background:linear-gradient(90deg,#0003ff 0,#0200ff 37px,#9c00ff 239px)"></i>
<i style="left:116px;top:460px;width:236px;height:2px;background:linear-gradient(90deg,#0002ff 0,#0200ff 35px,#9a00ff 236px)"></i>
<i style="left:117px;top:462px;width:233px;height:2px;background:linear-gradient(90deg,#0002ff 0,#0200ff 35px,#9800ff 233px)"></i>
<i style="left:119px;top:464px;width:229px;height:2px;background:linear-gradient(90deg,#0001ff 0,#0200ff 33px,#9500ff 229px)"></i>
<i style="left:120px;top:466px;width:226px;height:2px;background:linear-gradient(90deg,#0001ff 0,#0200ff 32px,#9300ff 226px)"></i>
<i style="left:122px;top:468px;width:222px;height:2px;background:linear-gradient(90deg,#00f 0,#0200ff 31px,#9000ff 222px)"></i>
<i style="left:123px;top:470px;width:220px;height:2px;background:linear-gradient(90deg,#00f 0,#0200ff 30px,#8f00ff 220px)"></i>
<i style="left:125px;top:472px;width:216px;height:2px;background:linear-gradient(90deg,#00f 0,#0200ff 28px,#8c00ff 216px)"></i>
<i style="left:126px;top:474px;width:213px;height:2px;background:linear-gradient(90deg,#00f 0,#0200ff 28px,#8a00ff 213px)"></i>
<i style="left:128px;top:476px;width:209px;height:2px;background:linear-gradient(90deg,#00f 0,#0200ff 26px,#8700ff 209px)"></i>
<i style="left:129px;top:478px;width:207px;height:2px;background:linear-gradient(90deg,#00f 0,#0200ff 25px,#8600ff 207px)"></i>
<i style="left:131px;top:480px;width:203px;height:2px;background:linear-gradient(90deg,#00f 0,#0200ff 24px,#8300ff 203px)"></i>
<i style="left:133px;top:482px;width:199px;height:2px;background:linear-gradient(90deg,#00f 0,#0200ff 22px,#8100ff 199px)"></i>
<i style="left:134px;top:484px;width:196px;height:2px;background:linear-gradient(90deg,#00f 0,#0200ff 21px,#7f00ff 196px)"></i>
<i style="left:136px;top:486px;width:193px;height:2px;background:linear-gradient(90deg,#00f 0,#0200ff 20px,#7d00ff 193px)"></i>
<i style="left:137px;top:488px;width:190px;height:2px;background:linear-gradient(90deg,#00f 0,#0200ff 19px,#7b00ff 190px)"></i>
<i style="left:139px;top:490px;width:186px;height:2px;background:linear-gradient(90deg,#00f 0,#0200ff 17px,#7900ff 186px)"></i>
<i style="left:141px;top:492px;width:182px;height:2px;background:linear-gradient(90deg,#00f 0,#0200ff 16px,#7600ff 182px)"></i>
<i style="left:142px;top:494px;width:180px;height:2px;background:linear-gradient(90deg,#00f 0,#0300ff 16px,#7500ff 180px)"></i>
<i style="left:144px;top:496px;width:176px;height:2px;background:linear-gradient(90deg,#00f 0,#0300ff 14px,#7300ff 176px)"></i>
<i style="left:146px;top:498px;width:172px;height:2px;background:linear-gradient(90deg,#00f 0,#0300ff 13px,#7100ff 172px)"></i>
</div>
<svg id="ov" width="644" height="500" viewBox="0 0 644 500"><path d="M241.9 582.5 240.9 582.6 240.3 583.1 237.9 582.9 235.3 581.4 232.6 579.3 224.6 572.4 181.9 533.2 168 519.8 156.2 507.6 143 492.9 132.9 480.6 121.4 465.6 108.8 448 95.4 428.3 81.3 406.4 66.7 382.1 51.6 355.8 36.5 328.2 21.5 299.7 7.1 270.8 0.3 256.3 -6.2 242 -17.8 214 -28.1 187.3 -36.9 162.4 -44.2 139.6 -50 119.3 -54.2 101.5 -57.2 85.9 -59 72.5 -59.7 61 -59.3 51 -58.8 46.6 -57 38.7 -55.8 35.2 -54.4 32 -52.8 29.1 -50.9 26.4 -49 24.1 -46.8 22 -44.5 20.2 -42 18.7 -36.8 16.3 -34 15.3 -28.2 14 -18.8 12.9 -5.5 12.3 14.6 12.5 32.2 13.4 55.1 15.3 94.4 19.5 159.1 27.3 674.5 92.5ZM470.7 76.1 86.3 36.5 145.8 441.1Z" fill="#000" fill-opacity="0.40" fill-rule="evenodd"/><g fill="none" stroke="#fff" stroke-opacity=".93" stroke-width="1.6"><rect x="79.4" y="28.9" width="14" height="14"/><rect x="96.6" y="35.8" width="14" height="14"/><rect x="100.6" y="39.1" width="14" height="14"/><rect x="104.6" y="43" width="14" height="14"/><rect x="139.2" y="49.8" width="14" height="14"/><rect x="153.2" y="50.1" width="14" height="14"/><rect x="154.8" y="37.1" width="14" height="14"/><rect x="161" y="37.5" width="14" height="14"/><rect x="173.3" y="38.5" width="14" height="14"/><rect x="180.8" y="43.3" width="14" height="14"/><rect x="190.4" y="40.1" width="14" height="14"/><rect x="113" y="66.6" width="14" height="14"/><rect x="84.9" y="69.4" width="14" height="14"/><rect x="100.6" y="83.6" width="14" height="14"/><rect x="113.5" y="82" width="14" height="14"/><rect x="118.5" y="97.2" width="14" height="14"/><rect x="175" y="73.7" width="14" height="14"/><rect x="156.6" y="93.2" width="14" height="14"/><rect x="149.4" y="102.3" width="14" height="14"/><rect x="191.4" y="83.2" width="14" height="14"/><rect x="90.7" y="108.7" width="14" height="14"/><rect x="215.6" y="45.5" width="14" height="14"/><rect x="218.3" y="44.1" width="14" height="14"/><rect x="225.3" y="44.1" width="14" height="14"/><rect x="257.5" y="47.1" width="14" height="14"/><rect x="260.2" y="48.2" width="14" height="14"/><rect x="246.4" y="53.8" width="14" height="14"/><rect x="283.3" y="61" width="14" height="14"/><rect x="276.9" y="69.3" width="14" height="14"/><rect x="244.6" y="68.6" width="14" height="14"/><rect x="228" y="76.1" width="14" height="14"/><rect x="208.1" y="87.3" width="14" height="14"/><rect x="239.8" y="85.7" width="14" height="14"/><rect x="254.8" y="83.6" width="14" height="14"/><rect x="280" y="91.7" width="14" height="14"/><rect x="204.4" y="99.4" width="14" height="14"/><rect x="267.5" y="107.4" width="14" height="14"/><rect x="92.3" y="116.4" width="14" height="14"/><rect x="151.6" y="113" width="14" height="14"/><rect x="170.7" y="111.7" width="14" height="14"/><rect x="184.6" y="111.2" width="14" height="14"/><rect x="95.3" y="137" width="14" height="14"/><rect x="103.1" y="139.4" width="14" height="14"/><rect x="97.7" y="152.6" width="14" height="14"/><rect x="99" y="162" width="14" height="14"/><rect x="118.5" y="153.4" width="14" height="14"/><rect x="141.1" y="152.8" width="14" height="14"/><rect x="141.1" y="158.2" width="14" height="14"/><rect x="172.1" y="154.9" width="14" height="14"/><rect x="180.6" y="189.5" width="14" height="14"/><rect x="203.1" y="104.8" width="14" height="14"/><rect x="218.8" y="139.4" width="14" height="14"/><rect x="213.9" y="168.8" width="14" height="14"/><rect x="289.5" y="140.9" width="14" height="14"/><rect x="313.8" y="54.4" width="14" height="14"/><rect x="350" y="57" width="14" height="14"/><rect x="358.7" y="92" width="14" height="14"/><rect x="414.7" y="72.5" width="14" height="14"/><rect x="343.1" y="110.5" width="14" height="14"/><rect x="397.4" y="110.5" width="14" height="14"/><rect x="314.8" y="148" width="14" height="14"/><rect x="351.6" y="152.3" width="14" height="14"/><rect x="460.5" y="69.8" width="14" height="14"/><rect x="457" y="73.7" width="14" height="14"/><rect x="453.6" y="77.4" width="14" height="14"/><rect x="447.9" y="83.1" width="14" height="14"/><rect x="104.6" y="200.2" width="14" height="14"/><rect x="238" y="203" width="14" height="14"/><rect x="109.1" y="229.2" width="14" height="14"/><rect x="139.6" y="240.6" width="14" height="14"/><rect x="274.7" y="229.2" width="14" height="14"/><rect x="291.2" y="261.4" width="14" height="14"/><rect x="127.1" y="319.1" width="14" height="14"/><rect x="138.6" y="434" width="14" height="14"/><rect x="256.2" y="74.6" width="14" height="14"/><rect x="259" y="76" width="14" height="14"/><rect x="258.3" y="79.6" width="14" height="14"/><rect x="263.3" y="78.2" width="14" height="14"/><rect x="217" y="89.5" width="14" height="14"/><rect x="222.5" y="87" width="14" height="14"/><rect x="228" y="90" width="14" height="14"/><rect x="233.5" y="87.5" width="14" height="14"/><rect x="213" y="92" width="14" height="14"/><rect x="269" y="72.5" width="14" height="14"/><rect x="272.5" y="70.5" width="14" height="14"/><rect x="260" y="67" width="14" height="14"/></g><path d="M169 123.2h-4v14h14.4v-14h-2.5" fill="none" stroke="#000" stroke-width="2.6"/><path d="M160.6 122.8h2.4" stroke="#000" stroke-width="1.6"/><circle cx="170.3" cy="132.7" r="4" fill="#c8c8c8" stroke="#000" stroke-width="1.6"/><g stroke="#0c0c0c" stroke-width="1.3"><circle cx="88.9" cy="36.1" r="4.2" fill="#00ee00"/><circle cx="101.7" cy="39.9" r="4.2" fill="#4e9a32"/><circle cx="107.3" cy="44.4" r="4.2" fill="#55a63a"/><circle cx="112.5" cy="47.1" r="4.2" fill="#4f9a33"/><circle cx="146.8" cy="56" r="4.2" fill="#8a9c3e"/><circle cx="158" cy="53" r="4.2" fill="#5a6a20"/><circle cx="161.8" cy="43.1" r="4.2" fill="#b5b51e"/><circle cx="168.8" cy="43.1" r="4.2" fill="#b5ae22"/><circle cx="185.3" cy="43.4" r="4.2" fill="#c8b020"/><circle cx="186.3" cy="49.1" r="4.2" fill="#a8a428"/><circle cx="178.7" cy="46.1" r="4.2" fill="#f5ee00"/><circle cx="195.6" cy="46" r="4.2" fill="#d0b81c"/><circle cx="120" cy="72.5" r="4.2" fill="#6aa868"/><circle cx="91.9" cy="76.9" r="4.2" fill="#1f8a5e"/><circle cx="107.3" cy="90.8" r="4.2" fill="#4c9a78"/><circle cx="114.4" cy="85" r="4.2" fill="#285a38"/><circle cx="179.2" cy="81.8" r="4.2" fill="#cccc84"/><circle cx="125.9" cy="106" r="4.2" fill="#80b898"/><circle cx="163.4" cy="101.8" r="4.2" fill="#d0e0b8"/><circle cx="154.9" cy="111.5" r="4.2" fill="#b4cca8"/><circle cx="199.9" cy="84.9" r="4.2" fill="#3c3020"/><circle cx="222.3" cy="48.2" r="4.2" fill="#c8a020"/><circle cx="221" cy="51.4" r="4.2" fill="#b89824"/><circle cx="229.3" cy="49.8" r="4.2" fill="#f0b810"/><circle cx="260.7" cy="52.5" r="4.2" fill="#e8a010"/><circle cx="264.5" cy="54.1" r="4.2" fill="#f5a808"/><circle cx="252" cy="60" r="4.2" fill="#c08840"/><circle cx="293.2" cy="65.4" r="4.2" fill="#a86840"/><circle cx="253" cy="74.8" r="4.2" fill="#a06c40"/><circle cx="264.5" cy="72.3" r="4.2" fill="#885030"/><circle cx="283.7" cy="76.7" r="4.2" fill="#d88c60"/><circle cx="274.6" cy="77.9" r="4.2" fill="#784830"/><circle cx="278.3" cy="78" r="4.2" fill="#5c3424"/><circle cx="233.9" cy="83.6" r="4.2" fill="#cc9060"/><circle cx="250.3" cy="84.9" r="4.2" fill="#d88c68"/><circle cx="257.7" cy="86.3" r="4.2" fill="#dc9070"/><circle cx="259" cy="92" r="4.2" fill="#ec9878"/><circle cx="213" cy="95.9" r="4.2" fill="#f0b898"/><circle cx="224.5" cy="95" r="4.2" fill="#c88c68"/><circle cx="238.2" cy="91.3" r="4.2" fill="#d8a888"/><circle cx="227" cy="93.8" r="4.2" fill="#e0a888"/><circle cx="232.2" cy="96" r="4.2" fill="#b88060"/><circle cx="232" cy="92.1" r="4.2" fill="#d09878"/><circle cx="243.6" cy="93.5" r="4.2" fill="#d49070"/><circle cx="284.1" cy="100.3" r="4.2" fill="#d47c64"/><circle cx="210.1" cy="107.4" r="4.2" fill="#f0c0a0"/><circle cx="206.8" cy="114.3" r="4.2" fill="#f0c0a8"/><circle cx="271.4" cy="115.9" r="4.2" fill="#c87878"/><circle cx="93.2" cy="122.8" r="4.2" fill="#184840"/><circle cx="98" cy="116.7" r="4.2" fill="#208878"/><circle cx="100.7" cy="126.1" r="4.2" fill="#209488"/><circle cx="158.7" cy="121.4" r="4.2" fill="#b8ccb0"/><circle cx="176" cy="121.3" r="4.2" fill="#d0c8b0"/><circle cx="187.5" cy="126.6" r="4.2" fill="#000000"/><circle cx="189.1" cy="119.9" r="4.2" fill="#e0c8b8"/><circle cx="110.3" cy="149.3" r="4.2" fill="#389898"/><circle cx="105" cy="144.8" r="4.2" fill="#00f0f0"/><circle cx="104.7" cy="161.8" r="4.2" fill="#208088"/><circle cx="126.1" cy="163.4" r="4.2" fill="#6090a8"/><circle cx="147" cy="163.1" r="4.2" fill="#607890"/><circle cx="147" cy="167.9" r="4.2" fill="#8ca0c0"/><circle cx="177.9" cy="165.9" r="4.2" fill="#8880a0"/><circle cx="102.1" cy="175.9" r="4.2" fill="#184850"/><circle cx="222.3" cy="149.3" r="4.2" fill="#c090a8"/><circle cx="225" cy="185.9" r="4.2" fill="#483048"/><circle cx="320.8" cy="58.9" r="4.2" fill="#f09018"/><circle cx="357" cy="63.4" r="4.2" fill="#f88c10"/><circle cx="368" cy="100.4" r="4.2" fill="#d05858"/><circle cx="427" cy="79.5" r="4.2" fill="#e85848"/><circle cx="373.9" cy="116.9" r="4.2" fill="#702838"/><circle cx="411.7" cy="119.8" r="4.2" fill="#c04070"/><circle cx="311" cy="154.8" r="4.2" fill="#682840"/><circle cx="322.2" cy="158.8" r="4.2" fill="#c05888"/><circle cx="366.8" cy="166" r="4.2" fill="#a83060"/><circle cx="480.5" cy="79.5" r="4.2" fill="#d01818"/><circle cx="477.5" cy="75.2" r="4.2" fill="#f01010"/><circle cx="477.5" cy="84" r="4.2" fill="#c81830"/><circle cx="470.7" cy="91.3" r="4.2" fill="#c01030"/><circle cx="112" cy="210.9" r="4.2" fill="#2088a8"/><circle cx="186" cy="203.8" r="4.2" fill="#786898"/><circle cx="248" cy="224.8" r="4.2" fill="#503050"/><circle cx="112.9" cy="250.6" r="4.2" fill="#105068"/><circle cx="145.1" cy="255.9" r="4.2" fill="#5060a0"/><circle cx="284" cy="250.6" r="4.2" fill="#803880"/><circle cx="294.1" cy="276.9" r="4.2" fill="#ff10f0"/><circle cx="132.8" cy="347.1" r="4.2" fill="#283870"/><circle cx="143.8" cy="443.7" r="4.2" fill="#1010e0"/></g></svg>
<div id="in">
<i style="left:0px;top:0px;width:184px;height:2px;background:linear-gradient(90deg,#abff00 0,#fffd00 150px,#ffea00 184px)"></i>
<i style="left:0px;top:2px;width:184px;height:2px;background:linear-gradient(90deg,#acff00 0,#fffd00 148px,#ffe900 184px)"></i>
<i style="left:0px;top:4px;width:184px;height:2px;background:linear-gradient(90deg,#acff00 0,#fffd00 147px,#ffe800 184px)"></i>
<i style="left:0px;top:6px;width:184px;height:2px;background:linear-gradient(90deg,#adff00 0,#fffd00 145px,#ffe700 184px)"></i>
<i style="left:0px;top:8px;width:184px;height:2px;background:linear-gradient(90deg,#aeff00 0,#fffd00 144px,#ffe600 184px)"></i>
<i style="left:0px;top:10px;width:184px;height:2px;background:linear-gradient(90deg,#aeff00 0,#fffd00 142px,#ffe500 184px)"></i>
<i style="left:0px;top:12px;width:184px;height:2px;background:linear-gradient(90deg,#afff00 0,#fffd00 140px,#ffe400 184px)"></i>
<i style="left:0px;top:14px;width:184px;height:2px;background:linear-gradient(90deg,#b0ff00 0,#fffd00 139px,#ffe400 184px)"></i>
<i style="left:0px;top:16px;width:184px;height:2px;background:linear-gradient(90deg,#b1ff01 0,#fffd00 137px,#ffe300 184px)"></i>
<i style="left:0px;top:18px;width:184px;height:2px;background:linear-gradient(90deg,#b1ff01 0,#fffd00 136px,#ffe200 184px)"></i>
<i style="left:0px;top:20px;width:184px;height:2px;background:linear-gradient(90deg,#b2ff01 0,#fffd00 134px,#ffe100 184px)"></i>
<i style="left:0px;top:22px;width:184px;height:2px;background:linear-gradient(90deg,#b3ff02 0,#fffd00 132px,#ffe000 184px)"></i>
<i style="left:0px;top:24px;width:184px;height:2px;background:linear-gradient(90deg,#b4ff02 0,#fffd00 131px,#ffdf00 184px)"></i>
<i style="left:0px;top:26px;width:184px;height:2px;background:linear-gradient(90deg,#b4ff03 0,#ebff00 94px,#fffd00 129px,#ffde00 184px)"></i>
<i style="left:0px;top:28px;width:184px;height:2px;background:linear-gradient(90deg,#b5ff03 0,#dfff00 72px,#fffd00 128px,#ffde00 184px)"></i>
<i style="left:0px;top:30px;width:184px;height:2px;background:linear-gradient(90deg,#b6ff03 0,#dcff00 66px,#fffd00 126px,#fd0 184px)"></i>
<i style="left:0px;top:32px;width:184px;height:2px;background:linear-gradient(90deg,#b7ff04 0,#dcff00 64px,#fffd00 125px,#ffdc00 184px)"></i>
<i style="left:0px;top:34px;width:184px;height:2px;background:linear-gradient(90deg,#b8ff04 0,#df0 64px,#fffd00 123px,#ffdb00 184px)"></i>
<i style="left:0px;top:36px;width:184px;height:2px;background:linear-gradient(90deg,#b8ff05 0,#deff00 65px,#fffd00 121px,#ffda00 184px)"></i>
<i style="left:0px;top:38px;width:184px;height:2px;background:linear-gradient(90deg,#b9ff05 0,#e0ff00 67px,#fffd00 120px,#ffd900 184px)"></i>
<i style="left:0px;top:40px;width:184px;height:2px;background:linear-gradient(90deg,#baff06 0,#e2ff00 68px,#fffd00 118px,#ffd800 184px)"></i>
<i style="left:0px;top:42px;width:184px;height:2px;background:linear-gradient(90deg,#bbff06 0,#e4ff00 70px,#fffd00 117px,#ffd800 184px)"></i>
<i style="left:0px;top:44px;width:184px;height:2px;background:linear-gradient(90deg,#bbff06 0,#e7ff00 73px,#fffd00 115px,#ffd700 184px)"></i>
<i style="left:0px;top:46px;width:184px;height:2px;background:linear-gradient(90deg,#bcff07 0,#e9ff00 76px,#fffd00 113px,#ffd600 184px)"></i>
<i style="left:0px;top:48px;width:184px;height:2px;background:linear-gradient(90deg,#bdff07 0,#ecff00 78px,#fffd00 112px,#ffd500 184px)"></i>
<i style="left:0px;top:50px;width:184px;height:2px;background:linear-gradient(90deg,#beff08 0,#ef0 81px,#fffd00 110px,#ffd400 184px)"></i>
<i style="left:0px;top:52px;width:184px;height:2px;background:linear-gradient(90deg,#bfff08 0,#f1ff00 84px,#fffd00 109px,#ffd300 184px)"></i>
<i style="left:0px;top:54px;width:184px;height:2px;background:linear-gradient(90deg,#bfff09 0,#f4ff00 87px,#fffd00 107px,#ffd300 184px)"></i>
<i style="left:0px;top:56px;width:184px;height:2px;background:linear-gradient(90deg,#c0ff09 0,#f7ff00 90px,#fffd00 106px,#ffd200 184px)"></i>
<i style="left:0px;top:58px;width:184px;height:2px;background:linear-gradient(90deg,#c1ff0a 0,#faff00 93px,#fffc00 106px,#ffd100 184px)"></i>
<i style="left:0px;top:60px;width:184px;height:2px;background:linear-gradient(90deg,#c2ff0a 0,#fdff00 96px,#ffe100 151px,#ffd000 184px)"></i>
<i style="left:0px;top:62px;width:184px;height:2px;background:linear-gradient(90deg,#c3ff0a 0,#fffe00 99px,#ffcf00 184px)"></i>
<i style="left:0px;top:64px;width:184px;height:2px;background:linear-gradient(90deg,#c4ff0b 0,#fffd00 99px,#ffce00 184px)"></i>
<i style="left:0px;top:66px;width:184px;height:2px;background:linear-gradient(90deg,#c4ff0b 0,#fffd00 97px,#ffce00 184px)"></i>
<i style="left:0px;top:68px;width:184px;height:2px;background:linear-gradient(90deg,#c5ff0c 0,#fffd00 96px,#ffcd00 184px)"></i>
<i style="left:0px;top:70px;width:184px;height:2px;background:linear-gradient(90deg,#c6ff0c 0,#fffd00 94px,#ffcd00 182px,#fc0 184px)"></i>
<i style="left:0px;top:72px;width:184px;height:2px;background:linear-gradient(90deg,#c7ff0d 0,#fffd01 93px,#ffcd00 181px,#ffcb00 184px)"></i>
<i style="left:0px;top:74px;width:184px;height:2px;background:linear-gradient(90deg,#c8ff0d 0,#fffd01 91px,#ffcd00 179px,#ffca00 184px)"></i>
<i style="left:0px;top:76px;width:184px;height:2px;background:linear-gradient(90deg,#c9ff0e 0,#fffd02 89px,#ffcd00 177px,#ffca00 184px)"></i>
<i style="left:0px;top:78px;width:184px;height:2px;background:linear-gradient(90deg,#caff0e 0,#fffd03 88px,#ffce00 172px,#ffc900 184px)"></i>
<i style="left:0px;top:80px;width:184px;height:2px;background:linear-gradient(90deg,#caff0f 0,#fffd03 86px,#ffda00 146px,#ffc800 184px)"></i>
<i style="left:0px;top:82px;width:184px;height:2px;background:linear-gradient(90deg,#cbff0f 0,#fffd04 85px,#ffdb00 143px,#ffc700 184px)"></i>
<i style="left:0px;top:84px;width:184px;height:2px;background:linear-gradient(90deg,#ccff10 0,#fffd05 83px,#ffdb00 142px,#ffc600 184px)"></i>
<i style="left:0px;top:86px;width:184px;height:2px;background:linear-gradient(90deg,#cdff10 0,#fffd05 81px,#ffda00 142px,#ffc600 184px)"></i>
<i style="left:0px;top:88px;width:184px;height:2px;background:linear-gradient(90deg,#ceff11 0,#fffd06 80px,#ffd800 144px,#ffc500 184px)"></i>
<i style="left:0px;top:90px;width:184px;height:2px;background:linear-gradient(90deg,#cfff11 0,#fffd07 78px,#ffd600 147px,#ffc400 184px)"></i>
<i style="left:0px;top:92px;width:184px;height:2px;background:linear-gradient(90deg,#d0ff12 0,#fffd07 77px,#ffd400 149px,#ffc300 184px)"></i>
<i style="left:0px;top:94px;width:184px;height:2px;background:linear-gradient(90deg,#d1ff12 0,#fffd08 75px,#ffd100 152px,#ffc200 184px)"></i>
<i style="left:0px;top:96px;width:184px;height:2px;background:linear-gradient(90deg,#d2ff13 0,#fffd09 73px,#ffcf00 155px,#ffc200 184px)"></i>
<i style="left:0px;top:98px;width:184px;height:2px;background:linear-gradient(90deg,#d2ff13 0,#fffd0a 72px,#ffcd00 157px,#ffc100 184px)"></i>
<i style="left:0px;top:100px;width:184px;height:2px;background:linear-gradient(90deg,#d3ff14 0,#fffd0a 70px,#ffcd00 156px,#ffc000 184px)"></i>
<i style="left:0px;top:102px;width:184px;height:2px;background:linear-gradient(90deg,#d4ff14 0,#fffd0b 69px,#fc0 155px,#ffbf00 184px)"></i>
<i style="left:0px;top:104px;width:184px;height:2px;background:linear-gradient(90deg,#d5ff15 0,#fffd0c 67px,#ffcd00 153px,#ffbf00 184px)"></i>
<i style="left:0px;top:106px;width:184px;height:2px;background:linear-gradient(90deg,#d6ff15 0,#fffe0c 65px,#ffcd00 151px,#ffbe00 184px)"></i>
<i style="left:0px;top:108px;width:184px;height:2px;background:linear-gradient(90deg,#d7ff16 0,#fffd0d 64px,#ffcc01 150px,#ffbd00 184px)"></i>
<i style="left:0px;top:110px;width:184px;height:2px;background:linear-gradient(90deg,#d8ff16 0,#fffd0e 62px,#ffcd02 147px,#ffbc00 184px)"></i>
<i style="left:0px;top:112px;width:184px;height:2px;background:linear-gradient(90deg,#d9ff17 0,#fffd0e 61px,#ffcd02 146px,#fb0 184px)"></i>
<i style="left:0px;top:114px;width:184px;height:2px;background:linear-gradient(90deg,#daff17 0,#fffd0f 59px,#ffcd03 144px,#fb0 184px)"></i>
<i style="left:0px;top:116px;width:184px;height:2px;background:linear-gradient(90deg,#dbff18 0,#fffe10 57px,#ffcd03 142px,#ffba00 184px)"></i>
<i style="left:0px;top:118px;width:184px;height:2px;background:linear-gradient(90deg,#dcff18 0,#fffd11 56px,#ffcc04 141px,#ffb900 184px)"></i>
<i style="left:0px;top:120px;width:184px;height:2px;background:linear-gradient(90deg,#ddff19 0,#fffd12 54px,#ffcd05 139px,#ffb800 184px)"></i>
<i style="left:0px;top:122px;width:184px;height:2px;background:linear-gradient(90deg,#deff19 0,#fffd12 53px,#ffcc05 138px,#ffb800 184px)"></i>
<i style="left:0px;top:124px;width:184px;height:2px;background:linear-gradient(90deg,#dfff1a 0,#fffd13 51px,#ffcd06 135px,#ffb700 184px)"></i>
<i style="left:0px;top:126px;width:184px;height:2px;background:linear-gradient(90deg,#e0ff1a 0,#fffd14 50px,#ffcd06 134px,#ffb600 184px)"></i>
<i style="left:0px;top:128px;width:184px;height:2px;background:linear-gradient(90deg,#e1ff1b 0,#fffd14 48px,#ffcd07 132px,#ffb501 184px)"></i>
<i style="left:0px;top:130px;width:184px;height:2px;background:linear-gradient(90deg,#e2ff1b 0,#fffd15 46px,#ffcd08 130px,#ffb501 184px)"></i>
<i style="left:0px;top:132px;width:184px;height:2px;background:linear-gradient(90deg,#e3ff1c 0,#fffd16 45px,#ffcc08 129px,#ffb401 184px)"></i>
<i style="left:0px;top:134px;width:184px;height:2px;background:linear-gradient(90deg,#e4ff1c 0,#fffd17 43px,#ffcd09 126px,#ffb302 184px)"></i>
<i style="left:0px;top:136px;width:184px;height:2px;background:linear-gradient(90deg,#e5ff1d 0,#fffd17 42px,#ffcd0a 125px,#ffb202 184px)"></i>
<i style="left:0px;top:138px;width:184px;height:2px;background:linear-gradient(90deg,#e6ff1e 0,#fffd18 40px,#ffcd0a 123px,#ffb202 184px)"></i>
<svg style="position:absolute;left:0;top:0" width="184" height="140"><path d="M0 0H184V125.7L0 14.5Z" fill="#000" fill-opacity="0.40"/><rect x="84" y="62" width="14" height="14" fill="none" stroke="#fff" stroke-width="1.3"/><circle cx="90" cy="65.2" r="4.4" fill="#ff0" stroke="#111" stroke-width="1.1"/></svg>
</div>
<div id="tip"></div>
</div><div style="position:absolute;left:1534px;top:551.5px;width:275px;height:1px;background:#6c6c6c"></div>
<div class="cx"><u style="left:1162.5px"></u><u style="left:1220.9px"></u><u style="left:1279.4px"></u><u style="left:1337.8px"></u><u style="left:1396.2px"></u><u style="left:1454.7px"></u><u style="left:1513.1px"></u><u style="left:1571.5px"></u><u style="left:1629.9px"></u><u style="left:1688.4px"></u><u style="left:1746.8px"></u></div><div class="cy"><u style="top:550.5px"></u><u style="top:500.6px"></u><u style="top:450.7px"></u><u style="top:400.8px"></u><u style="top:350.9px"></u><u style="top:301px"></u><u style="top:251.1px"></u><u style="top:201.2px"></u><u style="top:151.3px"></u><u style="top:101.4px"></u><u style="top:51.5px"></u></div>
<div id="st">
<div class="rot" style="left:2px;top:66px">Actual</div><div class="rot" style="left:2px;top:162px">Target</div>
<div class="sw" style="left:17px;background:linear-gradient(#fcfbff 0,#fcfbff 49.7%,#fdfdfd 49.7%)"></div>
<div class="sw" style="left:87.1px;background:linear-gradient(#333335 0,#333335 49.7%,#363636 49.7%)"></div>
<div class="sw" style="left:157.2px;background:linear-gradient(#6c6c6e 0,#6c6c6e 49.7%,#6a6a6a 49.7%)"></div>
<div class="sw" style="left:227.3px;background:linear-gradient(#adadaf 0,#adadaf 49.7%,#ababab 49.7%)"></div>
<div class="sw" style="left:297.4px;background:linear-gradient(#dddde1 0,#dddde1 49.7%,#dedede 49.7%)"></div>
<div class="sw" style="left:367.5px;background:linear-gradient(#262626 0,#262626 49.7%,#2b2b2b 49.7%)"></div>
<div class="sw" style="left:437.6px;background:linear-gradient(#b8b8ba 0,#b8b8ba 49.7%,#b7b7b7 49.7%)"></div>
<div class="sw" style="left:507.7px;background:linear-gradient(#525254 0,#525254 49.7%,#525252 49.7%)"></div>
<div class="sw" style="left:577.8px;background:linear-gradient(#929294 0,#929294 49.7%,#919191 49.7%)"></div>
<div class="sw" style="left:647.9px;background:linear-gradient(#777779 0,#777779 49.7%,#767676 49.7%)"></div>
<div class="sw" style="left:718px;background:linear-gradient(#5d5d5f 0,#5d5d5f 49.7%,#5d5d5d 49.7%)"></div>
<div class="sw" style="left:788.1px;background:linear-gradient(#9e9ea0 0,#9e9ea0 49.7%,#9d9d9d 49.7%)"></div>
<div class="sw" style="left:858.2px;background:linear-gradient(#484849 0,#484849 49.7%,#494949 49.7%)"></div>
<div class="sw" style="left:928.3px;background:linear-gradient(#c5c5c7 0,#c5c5c7 49.7%,#c4c4c4 49.7%)"></div>
<div class="sw" style="left:998.4px;background:linear-gradient(#000 0,#000 49.7%,#000 49.7%)"></div>
<div class="sw" style="left:1068.5px;background:linear-gradient(#921357 0,#921357 49.7%,#931e57 49.7%)"></div>
<div class="sw" style="left:1138.6px;background:linear-gradient(#472a47 0,#472a47 49.7%,#4a2d48 49.7%)"></div>
<div class="sw" style="left:1208.7px;background:linear-gradient(#d9d2c6 0,#d9d2c6 49.7%,#dcd3c5 49.7%)"></div>
<div class="sw" style="left:1278.8px;background:linear-gradient(#6f3b21 0,#6f3b21 49.7%,#713f27 49.7%)"></div>
<div class="sw" style="left:1348.9px;background:linear-gradient(#cc8b68 0,#cc8b68 49.7%,#ca8966 49.7%)"></div>
<div class="sw" style="left:1419px;background:linear-gradient(#566d86 0,#566d86 49.7%,#586e85 49.7%)"></div>
<div class="sw" style="left:1489.1px;background:linear-gradient(#55631b 0,#55631b 49.7%,#566220 49.7%)"></div>
<div class="sw" style="left:1559.2px;background:linear-gradient(#807595 0,#807595 49.7%,#807694 49.7%)"></div>
<div class="sw" style="left:1629.3px;background:linear-gradient(#6db691 0,#6db691 49.7%,#6cb591 49.7%)"></div>
<div class="sw" style="left:1699.4px;background:linear-gradient(#e3a878 0,#e3a878 49.7%,#e0a574 49.7%)"></div>
</div>
<div id="sb"><div class="ab l" style="left:.7px"></div><div class="th"></div><div class="ab r" style="right:.8px"></div></div>
<div class="t h1" style="left:124.8px;top:25.7px;font-size:39.4px;letter-spacing:0.062px;color:#f0f0f0">ColorChecker<span style="font-size:80%">®</span> Analysis</div>
<div class="t li" style="left:192.8px;top:93.1px;font-size:18.6px;letter-spacing:-0.089px;color:#f0f0f0">Click the <i>Read Series</i> button to measure all colors.</div>
<div class="t li" style="left:192.8px;top:124.0px;font-size:18.6px;letter-spacing:0.134px;color:#f0f0f0">Mouse over the error bars on the deltaE chart to view a visual</div>
<div class="t li" style="left:192.8px;top:149.0px;font-size:18.6px;letter-spacing:0.062px;color:#f0f0f0">representation of each color error. 1 dE error or less is</div>
<div class="t li" style="left:192.8px;top:173.9px;font-size:18.6px;letter-spacing:0.240px;color:#f0f0f0">typically not visible.</div>
<div class="t li" style="left:192.8px;top:198.9px;font-size:18.6px;letter-spacing:0.079px;color:#f0f0f0">View a larger visual error comparison for each color value on</div>
<div class="t li" style="left:192.8px;top:223.8px;font-size:18.6px;letter-spacing:0.293px;color:#f0f0f0">the color comparator chart below.</div>
<div class="t li" style="left:192.8px;top:254.8px;font-size:18.6px;letter-spacing:0.057px;color:#f0f0f0">Click “Save” to save data and view or print your <i>Display</i></div>
<div class="t li" style="left:192.8px;top:279.8px;font-size:18.6px;letter-spacing:0.019px;color:#f0f0f0"><i>Conformance Certificate</i>.</div>
<div class="t li" style="left:192.8px;top:310.8px;font-size:18.6px;letter-spacing:0.268px;color:#f0f0f0">Click “Next” to check how well the display could perform with</div>
<div class="t li" style="left:192.8px;top:335.8px;font-size:18.6px;letter-spacing:-0.223px;color:#f0f0f0">a corrective 3D LUT.</div>
<div class="t num" style="left:168.0px;top:93.1px;font-size:18.6px;color:#f0f0f0">1.</div>
<div class="t num" style="left:168.0px;top:124.0px;font-size:18.6px;color:#f0f0f0">2.</div>
<div class="t num" style="left:168.0px;top:254.8px;font-size:18.6px;color:#f0f0f0">3.</div>
<div class="t num" style="left:168.0px;top:310.8px;font-size:18.6px;color:#f0f0f0">4.</div>
<div class="t pd" style="left:332.7px;top:410.4px;font-size:20px;letter-spacing:0.360px;color:#f0f0f0">Performance Data</div>
<div class="t pl" style="left:129.1px;top:439.7px;font-size:24.6px;letter-spacing:1.023px;color:#f0f0f0">White Luminance:</div>
<div class="t pv" style="left:354.7px;top:439.7px;font-size:24.6px;letter-spacing:0.788px;color:#f0f0f0">597,8</div>
<div class="t pu" style="left:451.2px;top:438.7px;font-size:25.8px;letter-spacing:1.825px;color:#f0f0f0">cd/m²</div>
<div class="t pl" style="left:136.6px;top:481.7px;font-size:24.6px;letter-spacing:0.498px;color:#f0f0f0">Black Luminance:</div>
<div class="t pv" style="left:351.2px;top:481.7px;font-size:24.6px;color:#f0f0f0">0</div>
<div class="t pu" style="left:451.2px;top:480.7px;font-size:25.8px;letter-spacing:1.825px;color:#f0f0f0">cd/m²</div>
<div class="t pl" style="left:211.3px;top:523.9px;font-size:24.6px;letter-spacing:0.546px;color:#f0f0f0">Avg deltaE:</div>
<div class="t pv" style="left:356.9px;top:523.9px;font-size:24.6px;color:#f0f0f0">1</div>
<div class="t pl" style="left:206.1px;top:565.9px;font-size:24.6px;letter-spacing:0.733px;color:#f0f0f0">Max deltaE:</div>
<div class="t pv" style="left:357.3px;top:565.9px;font-size:24.6px;letter-spacing:0.448px;color:#f0f0f0">1,8</div>
<div class="t pu" style="left:445.2px;top:565.9px;font-size:24.6px;letter-spacing:0.643px;color:#f0f0f0">@ Point: 3H</div>
<div class="t ct" style="left:866.3px;top:28.4px;font-size:14.6px;letter-spacing:0.227px;color:#d6d6d6">DeltaE 2000</div>
<div class="t ct" style="left:1424.4px;top:33.1px;font-size:14.6px;letter-spacing:0.109px;color:#d6d6d6">CIE 1976 u'v'</div>
<div class="t ax" style="left:719.8px;top:565.6px;font-size:14.7px;color:#d6d6d6">0</div>
<div class="t ax" style="left:768.5px;top:565.6px;font-size:14.7px;color:#d6d6d6">2</div>
<div class="t ax" style="left:817.2px;top:565.6px;font-size:14.7px;color:#d6d6d6">4</div>
<div class="t ax" style="left:865.8px;top:565.6px;font-size:14.7px;color:#d6d6d6">6</div>
<div class="t ax" style="left:914.5px;top:565.6px;font-size:14.7px;color:#d6d6d6">8</div>
<div class="t ax" style="left:959.1px;top:565.6px;font-size:14.7px;letter-spacing:1.056px;color:#d6d6d6">10</div>
<div class="t ax" style="left:1007.8px;top:565.6px;font-size:14.7px;letter-spacing:1.056px;color:#d6d6d6">12</div>
<div class="t ax" style="left:1056.5px;top:565.6px;font-size:14.7px;letter-spacing:1.056px;color:#d6d6d6">14</div>
<div class="t ax" style="left:1135.4px;top:544.3px;font-size:14.7px;letter-spacing:0.439px;color:#d6d6d6">0,1</div>
<div class="t ax" style="left:1127.1px;top:494.4px;font-size:14.7px;letter-spacing:0.335px;color:#d6d6d6">0,15</div>
<div class="t ax" style="left:1135.4px;top:444.5px;font-size:14.7px;letter-spacing:0.439px;color:#d6d6d6">0,2</div>
<div class="t ax" style="left:1127.1px;top:394.6px;font-size:14.7px;letter-spacing:0.335px;color:#d6d6d6">0,25</div>
<div class="t ax" style="left:1135.4px;top:344.7px;font-size:14.7px;letter-spacing:0.439px;color:#d6d6d6">0,3</div>
<div class="t ax" style="left:1127.1px;top:294.8px;font-size:14.7px;letter-spacing:0.335px;color:#d6d6d6">0,35</div>
<div class="t ax" style="left:1135.4px;top:244.9px;font-size:14.7px;letter-spacing:0.439px;color:#d6d6d6">0,4</div>
<div class="t ax" style="left:1127.1px;top:195.0px;font-size:14.7px;letter-spacing:0.335px;color:#d6d6d6">0,45</div>
<div class="t ax" style="left:1135.4px;top:145.1px;font-size:14.7px;letter-spacing:0.439px;color:#d6d6d6">0,5</div>
<div class="t ax" style="left:1127.1px;top:95.2px;font-size:14.7px;letter-spacing:0.335px;color:#d6d6d6">0,55</div>
<div class="t ax" style="left:1135.4px;top:45.3px;font-size:14.7px;letter-spacing:0.439px;color:#d6d6d6">0,6</div>
<div class="t ax" style="left:1148.1px;top:561.3px;font-size:14.7px;letter-spacing:0.335px;color:#d6d6d6">0,05</div>
<div class="t ax" style="left:1210.7px;top:561.3px;font-size:14.7px;letter-spacing:0.439px;color:#d6d6d6">0,1</div>
<div class="t ax" style="left:1265.0px;top:561.3px;font-size:14.7px;letter-spacing:0.335px;color:#d6d6d6">0,15</div>
<div class="t ax" style="left:1327.5px;top:561.3px;font-size:14.7px;letter-spacing:0.439px;color:#d6d6d6">0,2</div>
<div class="t ax" style="left:1381.8px;top:561.3px;font-size:14.7px;letter-spacing:0.335px;color:#d6d6d6">0,25</div>
<div class="t ax" style="left:1444.4px;top:561.3px;font-size:14.7px;letter-spacing:0.439px;color:#d6d6d6">0,3</div>
<div class="t ax" style="left:1498.7px;top:561.3px;font-size:14.7px;letter-spacing:0.335px;color:#d6d6d6">0,35</div>
<div class="t ax" style="left:1561.3px;top:561.3px;font-size:14.7px;letter-spacing:0.439px;color:#d6d6d6">0,4</div>
<div class="t ax" style="left:1615.5px;top:561.3px;font-size:14.7px;letter-spacing:0.335px;color:#d6d6d6">0,45</div>
<div class="t ax" style="left:1678.1px;top:561.3px;font-size:14.7px;letter-spacing:0.439px;color:#d6d6d6">0,5</div>
<div class="t ax" style="left:1732.4px;top:561.3px;font-size:14.7px;letter-spacing:0.335px;color:#d6d6d6">0,55</div>
<div class="t tt" style="left:1534.2px;top:500.7px;font-size:19.8px;letter-spacing:0.260px;color:#f0f0f0">RGB Triplet: 255, 255, 0</div>
<div class="t tt" style="left:1580.7px;top:528.8px;font-size:19.8px;letter-spacing:0.391px;color:#f0f0f0">deltaE: 0,3</div>
<div class="t sl" style="left:146.8px;top:790.8px;font-size:12px;letter-spacing:0.150px;color:#f4f4f4;font-weight:bold">White</div>
<div class="t sl" style="left:225.9px;top:790.8px;font-size:12px;color:#f4f4f4;font-weight:bold">8K</div>
<div class="t sl" style="left:296.0px;top:790.8px;font-size:12px;color:#f4f4f4;font-weight:bold">7K</div>
<div class="t sl" style="left:366.1px;top:790.8px;font-size:12px;color:#f4f4f4;font-weight:bold">6K</div>
<div class="t sl" style="left:437.2px;top:790.8px;font-size:12px;color:#f4f4f4;font-weight:bold">6J</div>
<div class="t sl" style="left:507.3px;top:790.8px;font-size:12px;color:#f4f4f4;font-weight:bold">5J</div>
<div class="t sl" style="left:579.1px;top:790.8px;font-size:12px;color:#f4f4f4;font-weight:bold">6I</div>
<div class="t sl" style="left:649.2px;top:790.8px;font-size:12px;color:#f4f4f4;font-weight:bold">5I</div>
<div class="t sl" style="left:716.6px;top:790.8px;font-size:12px;color:#f4f4f4;font-weight:bold">6H</div>
<div class="t sl" style="left:786.7px;top:790.8px;font-size:12px;color:#f4f4f4;font-weight:bold">5H</div>
<div class="t sl" style="left:856.5px;top:790.8px;font-size:12px;color:#f4f4f4;font-weight:bold">6G</div>
<div class="t sl" style="left:926.6px;top:790.8px;font-size:12px;color:#f4f4f4;font-weight:bold">5G</div>
<div class="t sl" style="left:997.7px;top:790.8px;font-size:12px;color:#f4f4f4;font-weight:bold">6F</div>
<div class="t sl" style="left:1067.8px;top:790.8px;font-size:12px;color:#f4f4f4;font-weight:bold">5F</div>
<div class="t sl" style="left:1128.5px;top:790.8px;font-size:12px;letter-spacing:0.150px;color:#f4f4f4;font-weight:bold">Black</div>
<div class="t sl" style="left:1207.3px;top:790.8px;font-size:12px;color:#f4f4f4;font-weight:bold">2B</div>
<div class="t sl" style="left:1277.4px;top:790.8px;font-size:12px;color:#f4f4f4;font-weight:bold">2C</div>
<div class="t sl" style="left:1347.5px;top:790.8px;font-size:12px;color:#f4f4f4;font-weight:bold">2D</div>
<div class="t sl" style="left:1418.0px;top:790.8px;font-size:12px;color:#f4f4f4;font-weight:bold">2E</div>
<div class="t sl" style="left:1488.4px;top:790.8px;font-size:12px;color:#f4f4f4;font-weight:bold">2F</div>
<div class="t sl" style="left:1557.5px;top:790.8px;font-size:12px;color:#f4f4f4;font-weight:bold">2G</div>
<div class="t sl" style="left:1627.9px;top:790.8px;font-size:12px;color:#f4f4f4;font-weight:bold">2H</div>
<div class="t sl" style="left:1700.7px;top:790.8px;font-size:12px;color:#f4f4f4;font-weight:bold">2I</div>
<div class="t sl" style="left:1769.1px;top:790.8px;font-size:12px;color:#f4f4f4;font-weight:bold">2J</div>
</body></html>
